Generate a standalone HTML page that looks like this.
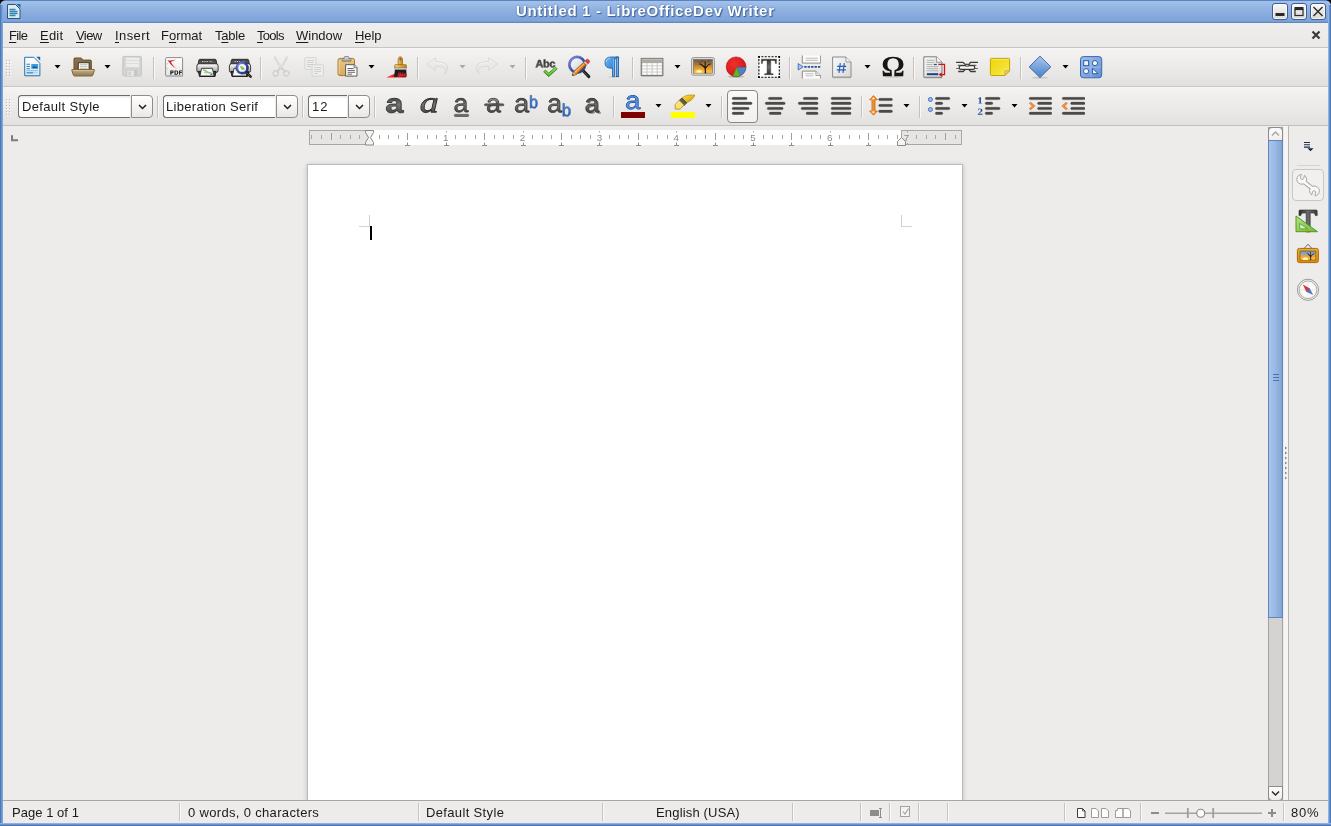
<!DOCTYPE html>
<html><head><meta charset="utf-8"><title>Untitled 1 - LibreOfficeDev Writer</title>
<style>
html,body{margin:0;padding:0}
body{width:1331px;height:826px;position:relative;overflow:hidden;background:#edeceb;font-family:"Liberation Sans", sans-serif;}
body>div,.ic{position:absolute;box-sizing:content-box}
.t{position:absolute;white-space:nowrap;line-height:20px;font-family:"Liberation Sans", sans-serif;will-change:transform}
u{text-decoration:underline;text-underline-offset:1.5px;text-decoration-thickness:1px}
</style></head>
<body>
<svg width="0" height="0" style="position:absolute"><defs><linearGradient id="gPage" x1="0" y1="0" x2="0" y2="1"><stop offset="0" stop-color="#ffffff"/><stop offset="1" stop-color="#dfe6ee"/></linearGradient><linearGradient id="gFoldB" x1="0" y1="0" x2="0" y2="1"><stop offset="0" stop-color="#8f7650"/><stop offset="1" stop-color="#74603f"/></linearGradient><linearGradient id="gFoldF" x1="0" y1="0" x2="0" y2="1"><stop offset="0" stop-color="#c4b394"/><stop offset="0.5" stop-color="#a89472"/><stop offset="1" stop-color="#8c7855"/></linearGradient><linearGradient id="gPdfPage" x1="0" y1="0" x2="0" y2="1"><stop offset="0" stop-color="#ffffff"/><stop offset="1" stop-color="#e4e4e3"/></linearGradient><linearGradient id="gPdfRed" x1="0" y1="0" x2="1" y2="1"><stop offset="0" stop-color="#e23b3b"/><stop offset="1" stop-color="#ffffff"/></linearGradient><linearGradient id="gPrBody" x1="0" y1="0" x2="0" y2="1"><stop offset="0" stop-color="#f2f2f2"/><stop offset="0.5" stop-color="#cfcfcf"/><stop offset="1" stop-color="#8e8e8e"/></linearGradient><linearGradient id="gPrTop" x1="0" y1="0" x2="0" y2="1"><stop offset="0" stop-color="#3c3c3c"/><stop offset="1" stop-color="#666666"/></linearGradient><linearGradient id="gLens" x1="0" y1="0" x2="1" y2="1"><stop offset="0" stop-color="#8a98ee"/><stop offset="0.5" stop-color="#3a4bb8"/><stop offset="1" stop-color="#1f2a7a"/></linearGradient><linearGradient id="gClipB" x1="0" y1="0" x2="0" y2="1"><stop offset="0" stop-color="#ecc587"/><stop offset="1" stop-color="#d9a95a"/></linearGradient><linearGradient id="gClipM" x1="0" y1="0" x2="0" y2="1"><stop offset="0" stop-color="#e9e9e8"/><stop offset="1" stop-color="#9c9c9a"/></linearGradient><linearGradient id="gBrH" x1="0" y1="0" x2="1" y2="0"><stop offset="0" stop-color="#f2d08a"/><stop offset="0.5" stop-color="#d9a64a"/><stop offset="1" stop-color="#b67f22"/></linearGradient><linearGradient id="gBrF" x1="0" y1="0" x2="1" y2="0"><stop offset="0" stop-color="#f5d77f"/><stop offset="0.5" stop-color="#e0ac3c"/><stop offset="1" stop-color="#b8831f"/></linearGradient><linearGradient id="gBrRed" x1="0" y1="0" x2="1" y2="0"><stop offset="0" stop-color="#ff2a2a"/><stop offset="1" stop-color="#c41616"/></linearGradient><linearGradient id="gAbc" x1="0" y1="0" x2="0" y2="1"><stop offset="0" stop-color="#1e1e1e"/><stop offset="1" stop-color="#585856"/></linearGradient><linearGradient id="gChk" x1="0" y1="0" x2="0" y2="1"><stop offset="0" stop-color="#7fe048"/><stop offset="1" stop-color="#3aa012"/></linearGradient><linearGradient id="gRing" x1="0" y1="0" x2="1" y2="1"><stop offset="0" stop-color="#8e9be6"/><stop offset="0.45" stop-color="#4455b8"/><stop offset="1" stop-color="#27348a"/></linearGradient><linearGradient id="gGlass" x1="0" y1="0" x2="1" y2="1"><stop offset="0" stop-color="#ffffff"/><stop offset="1" stop-color="#c9cbd2"/></linearGradient><linearGradient id="gPencil" x1="0" y1="0" x2="1" y2="1"><stop offset="0" stop-color="#f7b55a"/><stop offset="0.5" stop-color="#ea8c1a"/><stop offset="1" stop-color="#b8640c"/></linearGradient><linearGradient id="gPil" x1="0" y1="0" x2="1" y2="1"><stop offset="0" stop-color="#6db6f0"/><stop offset="0.5" stop-color="#3d8fd8"/><stop offset="1" stop-color="#1d66b4"/></linearGradient><linearGradient id="gSky" x1="0" y1="0" x2="0" y2="1"><stop offset="0" stop-color="#6a5a48"/><stop offset="0.35" stop-color="#a8783a"/><stop offset="0.7" stop-color="#f0a22e"/><stop offset="1" stop-color="#ffc845"/></linearGradient><radialGradient id="gSun" cx="0.5" cy="0.5" r="0.5"><stop offset="0" stop-color="#ffffff"/><stop offset="0.5" stop-color="#fff2a0"/><stop offset="1" stop-color="#ffc845"/></radialGradient><radialGradient id="gPieR" cx="0.4" cy="0.35" r="0.7"><stop offset="0" stop-color="#f03030"/><stop offset="1" stop-color="#d41212"/></radialGradient><linearGradient id="gT" x1="0" y1="0" x2="0" y2="1"><stop offset="0" stop-color="#2a2a2a"/><stop offset="0.5" stop-color="#6e6e6e"/><stop offset="1" stop-color="#2e2e2e"/></linearGradient><linearGradient id="gFld" x1="0" y1="0" x2="1" y2="1"><stop offset="0" stop-color="#f8f8f8"/><stop offset="1" stop-color="#d9d9d8"/></linearGradient><linearGradient id="gNote" x1="0" y1="0" x2="1" y2="1"><stop offset="0" stop-color="#efd60a"/><stop offset="0.6" stop-color="#f3e032"/><stop offset="1" stop-color="#f8ee80"/></linearGradient><linearGradient id="gDia" x1="0" y1="0" x2="0" y2="1"><stop offset="0" stop-color="#a9c5ec"/><stop offset="0.5" stop-color="#79a3dc"/><stop offset="1" stop-color="#4a80c8"/></linearGradient><linearGradient id="gShp" x1="0" y1="0" x2="1" y2="1"><stop offset="0" stop-color="#9ebce8"/><stop offset="0.5" stop-color="#85a9e0"/><stop offset="1" stop-color="#5f8fd2"/></linearGradient><linearGradient id="gChar" x1="0" y1="0" x2="0" y2="1"><stop offset="0" stop-color="#4c4c4a"/><stop offset="0.45" stop-color="#767674"/><stop offset="1" stop-color="#4a4a48"/></linearGradient><linearGradient id="gCharL" x1="0" y1="0" x2="0" y2="1"><stop offset="0" stop-color="#a8a8a6"/><stop offset="0.35" stop-color="#6a6a68"/><stop offset="1" stop-color="#4a4a48"/></linearGradient><linearGradient id="gBlueCh" x1="0" y1="0" x2="0" y2="1"><stop offset="0" stop-color="#6aa0e8"/><stop offset="1" stop-color="#2a62b8"/></linearGradient><linearGradient id="gMark" x1="0" y1="0" x2="1" y2="1"><stop offset="0" stop-color="#fbe25a"/><stop offset="0.5" stop-color="#e8bd1e"/><stop offset="1" stop-color="#b88a0c"/></linearGradient><linearGradient id="gLine" x1="0" y1="0" x2="0" y2="1"><stop offset="0" stop-color="#2a2a29"/><stop offset="0.6" stop-color="#4c4c4a"/><stop offset="1" stop-color="#7c7c7a"/></linearGradient><linearGradient id="gOrA" x1="0" y1="0" x2="1" y2="0"><stop offset="0" stop-color="#f6c08a"/><stop offset="0.5" stop-color="#e8923a"/><stop offset="1" stop-color="#e07a18"/></linearGradient><linearGradient id="gTs" x1="0" y1="0" x2="1" y2="0"><stop offset="0" stop-color="#2e2e2e"/><stop offset="0.5" stop-color="#6a6a6a"/><stop offset="1" stop-color="#3a3a3a"/></linearGradient><linearGradient id="gTri" x1="0" y1="0" x2="1" y2="1"><stop offset="0" stop-color="#b4e48a"/><stop offset="1" stop-color="#6cbc3a"/></linearGradient><linearGradient id="gSky2" x1="0" y1="0" x2="0" y2="1"><stop offset="0" stop-color="#5f97d4"/><stop offset="0.3" stop-color="#8aa8c4"/><stop offset="0.6" stop-color="#f0a436"/><stop offset="1" stop-color="#ffcf50"/></linearGradient><linearGradient id="gFrame" x1="0" y1="0" x2="0" y2="1"><stop offset="0" stop-color="#f0ac30"/><stop offset="1" stop-color="#d88c12"/></linearGradient><radialGradient id="gComp" cx="0.5" cy="0.5" r="0.5"><stop offset="0" stop-color="#ffffff"/><stop offset="0.8" stop-color="#fafafa"/><stop offset="1" stop-color="#e4e4e2"/></radialGradient></defs></svg>
<div style="left:0px;top:0px;width:1331px;height:23px;background:linear-gradient(#9ebde8 0px,#a3c1ea 1px,#8fb1e1 10px,#7ea3d8 21px,#6f95cd 22px);"></div>
<div style="left:0px;top:0px;width:1331px;height:1px;background:#5a82be;"></div>
<div style="left:0px;top:22px;width:1331px;height:1px;background:#5f88c5;"></div>
<svg class="ic" style="left:0;top:0" width="6" height="6" viewBox="0 0 6 6"><path d="M0 0h5C2.5 0.5 0.5 2.5 0 5z" fill="#0c0c0c"/></svg>
<svg class="ic" style="left:1325px;top:0" width="6" height="6" viewBox="0 0 6 6"><path d="M6 0h-5C3.5 0.5 5.5 2.5 6 5z" fill="#0c0c0c"/></svg>
<div class="t" id="title" style="left:515.88px;top:0.6px;font-size:15px;font-weight:bold;color:#fff;letter-spacing:0.678px;text-shadow:1px 1px 1px #3d5f94,0 0 2px #4a6ea8;">Untitled 1 - LibreOfficeDev Writer</div>
<svg class="ic" style="left:6px;top:3px" width="16" height="17" viewBox="0 0 16 17"><path d="M1.500 1.500h8l4.500 4.500v9.500h-12.500z" fill="#e4e8ee" stroke="#1f5a84" stroke-width="1"/><path d="M10.500 1h4v4z" fill="#1b6ea8"/><path d="M3.500 6.500h6M3.500 8.500h8M3.500 10.500h8M3.500 12.500h6" stroke="#2f86b4" stroke-width="1.300"/></svg>
<div style="left:1272px;top:3px;width:14px;height:15px;border:1px solid #3a5e96;border-radius:3px;background:linear-gradient(#fbfaf9,#e9e7e3 50%,#dcd9d4);box-shadow:inset 0 0 0 1px rgba(255,255,255,.7)"></div><svg class="ic" style="left:1272px;top:3px" width="16" height="17" viewBox="0 0 16 17"><rect x="3.5" y="10" width="9" height="3" fill="#2a2a2a"/></svg>
<div style="left:1291px;top:3px;width:14px;height:15px;border:1px solid #3a5e96;border-radius:3px;background:linear-gradient(#fbfaf9,#e9e7e3 50%,#dcd9d4);box-shadow:inset 0 0 0 1px rgba(255,255,255,.7)"></div><svg class="ic" style="left:1291px;top:3px" width="16" height="17" viewBox="0 0 16 17"><rect x="3.5" y="4" width="9" height="3" fill="#2a2a2a"/><rect x="4" y="6.5" width="8" height="6" fill="none" stroke="#2a2a2a" stroke-width="1.2"/></svg>
<div style="left:1310px;top:3px;width:14px;height:15px;border:1px solid #3a5e96;border-radius:3px;background:linear-gradient(#fbfaf9,#e9e7e3 50%,#dcd9d4);box-shadow:inset 0 0 0 1px rgba(255,255,255,.7)"></div><svg class="ic" style="left:1310px;top:3px" width="16" height="17" viewBox="0 0 16 17"><path d="M3.5 4l9 9M12.5 4l-9 9" stroke="#2a2a2a" stroke-width="1.4" fill="none"/></svg>
<div style="left:3px;top:23px;width:1325px;height:24px;background:linear-gradient(#efeeec,#eae9e7);"></div>
<div style="left:3px;top:47px;width:1325px;height:1px;background:#c8c6c3;"></div>
<div class="t" style="left:9.44px;top:25.50px;font-size:13px;letter-spacing:-0.654px;color:#1a1a1a;font-weight:normal;" id="m0"><u>F</u>ile</div>
<div class="t" style="left:39.98px;top:25.50px;font-size:13px;letter-spacing:0.219px;color:#1a1a1a;font-weight:normal;" id="m1"><u>E</u>dit</div>
<div class="t" style="left:76.0px;top:25.50px;font-size:13px;letter-spacing:-0.605px;color:#1a1a1a;font-weight:normal;" id="m2"><u>V</u>iew</div>
<div class="t" style="left:115.0px;top:25.50px;font-size:13px;letter-spacing:0.396px;color:#1a1a1a;font-weight:normal;" id="m3"><u>I</u>nsert</div>
<div class="t" style="left:161.26px;top:25.50px;font-size:13px;letter-spacing:-0.004px;color:#1a1a1a;font-weight:normal;" id="m4">F<u>o</u>rmat</div>
<div class="t" style="left:215.06px;top:25.50px;font-size:13px;letter-spacing:-0.2px;color:#1a1a1a;font-weight:normal;" id="m5">T<u>a</u>ble</div>
<div class="t" style="left:257.0px;top:25.50px;font-size:13px;letter-spacing:-0.7px;color:#1a1a1a;font-weight:normal;" id="m6"><u>T</u>ools</div>
<div class="t" style="left:296.0px;top:25.50px;font-size:13px;letter-spacing:-0.02px;color:#1a1a1a;font-weight:normal;" id="m7"><u>W</u>indow</div>
<div class="t" style="left:355.0px;top:25.50px;font-size:13px;letter-spacing:-0.048px;color:#1a1a1a;font-weight:normal;" id="m8"><u>H</u>elp</div>
<svg class="ic" style="left:1311px;top:30px" width="10" height="10" viewBox="0 0 10 10"><path d="M1.5 1.5l7 7M8.5 1.5l-7 7" stroke="#3a3a3a" stroke-width="2.2" fill="none"/></svg>
<div style="left:3px;top:48px;width:1325px;height:38px;background:linear-gradient(#f7f7f6 0,#f3f2f1 3px,#e9e8e6 24px,#e2e1df 38px);"></div>
<div style="left:3px;top:86px;width:1325px;height:1px;background:#c9c7c4;"></div>
<div style="left:3px;top:87px;width:1325px;height:38px;background:linear-gradient(#f7f7f6 0,#f3f2f1 3px,#e9e8e6 24px,#e2e1df 38px);"></div>
<div style="left:3px;top:125px;width:1325px;height:1px;background:#c2c0bd;"></div>
<div style="left:6px;top:60px;width:1px;height:1px;background:#b9b7b3;"></div><div style="left:7px;top:61px;width:1px;height:1px;background:#fbfbfa;"></div><div style="left:9px;top:60px;width:1px;height:1px;background:#b9b7b3;"></div><div style="left:10px;top:61px;width:1px;height:1px;background:#fbfbfa;"></div><div style="left:6px;top:63px;width:1px;height:1px;background:#b9b7b3;"></div><div style="left:7px;top:64px;width:1px;height:1px;background:#fbfbfa;"></div><div style="left:9px;top:63px;width:1px;height:1px;background:#b9b7b3;"></div><div style="left:10px;top:64px;width:1px;height:1px;background:#fbfbfa;"></div><div style="left:6px;top:66px;width:1px;height:1px;background:#b9b7b3;"></div><div style="left:7px;top:67px;width:1px;height:1px;background:#fbfbfa;"></div><div style="left:9px;top:66px;width:1px;height:1px;background:#b9b7b3;"></div><div style="left:10px;top:67px;width:1px;height:1px;background:#fbfbfa;"></div><div style="left:6px;top:69px;width:1px;height:1px;background:#b9b7b3;"></div><div style="left:7px;top:70px;width:1px;height:1px;background:#fbfbfa;"></div><div style="left:9px;top:69px;width:1px;height:1px;background:#b9b7b3;"></div><div style="left:10px;top:70px;width:1px;height:1px;background:#fbfbfa;"></div><div style="left:6px;top:72px;width:1px;height:1px;background:#b9b7b3;"></div><div style="left:7px;top:73px;width:1px;height:1px;background:#fbfbfa;"></div><div style="left:9px;top:72px;width:1px;height:1px;background:#b9b7b3;"></div><div style="left:10px;top:73px;width:1px;height:1px;background:#fbfbfa;"></div><div style="left:6px;top:75px;width:1px;height:1px;background:#b9b7b3;"></div><div style="left:7px;top:76px;width:1px;height:1px;background:#fbfbfa;"></div><div style="left:9px;top:75px;width:1px;height:1px;background:#b9b7b3;"></div><div style="left:10px;top:76px;width:1px;height:1px;background:#fbfbfa;"></div>
<div style="left:6px;top:99px;width:1px;height:1px;background:#b9b7b3;"></div><div style="left:7px;top:100px;width:1px;height:1px;background:#fbfbfa;"></div><div style="left:9px;top:99px;width:1px;height:1px;background:#b9b7b3;"></div><div style="left:10px;top:100px;width:1px;height:1px;background:#fbfbfa;"></div><div style="left:6px;top:102px;width:1px;height:1px;background:#b9b7b3;"></div><div style="left:7px;top:103px;width:1px;height:1px;background:#fbfbfa;"></div><div style="left:9px;top:102px;width:1px;height:1px;background:#b9b7b3;"></div><div style="left:10px;top:103px;width:1px;height:1px;background:#fbfbfa;"></div><div style="left:6px;top:105px;width:1px;height:1px;background:#b9b7b3;"></div><div style="left:7px;top:106px;width:1px;height:1px;background:#fbfbfa;"></div><div style="left:9px;top:105px;width:1px;height:1px;background:#b9b7b3;"></div><div style="left:10px;top:106px;width:1px;height:1px;background:#fbfbfa;"></div><div style="left:6px;top:108px;width:1px;height:1px;background:#b9b7b3;"></div><div style="left:7px;top:109px;width:1px;height:1px;background:#fbfbfa;"></div><div style="left:9px;top:108px;width:1px;height:1px;background:#b9b7b3;"></div><div style="left:10px;top:109px;width:1px;height:1px;background:#fbfbfa;"></div><div style="left:6px;top:111px;width:1px;height:1px;background:#b9b7b3;"></div><div style="left:7px;top:112px;width:1px;height:1px;background:#fbfbfa;"></div><div style="left:9px;top:111px;width:1px;height:1px;background:#b9b7b3;"></div><div style="left:10px;top:112px;width:1px;height:1px;background:#fbfbfa;"></div><div style="left:6px;top:114px;width:1px;height:1px;background:#b9b7b3;"></div><div style="left:7px;top:115px;width:1px;height:1px;background:#fbfbfa;"></div><div style="left:9px;top:114px;width:1px;height:1px;background:#b9b7b3;"></div><div style="left:10px;top:115px;width:1px;height:1px;background:#fbfbfa;"></div>
<svg class="ic" style="left:20.0px;top:55.0px" width="24" height="24" viewBox="0 0 24 24"><path d="M4.7 2.3h9.2l6 6v12.4h-15.2z" fill="url(#gPage)" stroke="#2675a8" stroke-width="1"/><path d="M16.3 1.8h3.9v3.9z" fill="#1a6aa5"/><path d="M6.5 9.2h3.4M6.500 11.500h3.400M6.500 13.800h3.400" stroke="#2b84c4" stroke-width="1.1"/><rect x="11.3" y="9" width="6.8" height="4.900" fill="#35a0e6"/><path d="M12.300 12.800l1.600-2 1.300 1.200 1-1 1.200 1.800z" fill="#234a6a"/><path d="M6.500 15.700h11.600" stroke="#7fc0ea" stroke-width="1.100"/><path d="M6.500 17.800h6.500" stroke="#3a8dc8" stroke-width="1.300"/><path d="M13 17.800h5" stroke="#a5d2ee" stroke-width="1.100"/><path d="M5.500 21.200h14" stroke="#8fa8bd" stroke-width=".8" opacity=".6"/></svg>
<svg class="ic" style="left:54.0px;top:65px" width="7" height="4" viewBox="0 0 7 4"><path d="M0.5 0h6L3.5 3.5z" fill="#000"/></svg>
<svg class="ic" style="left:70.5px;top:55.0px" width="24" height="24" viewBox="0 0 24 24"><path d="M3 15.500v-11.600q0-.9.900-.9h6q.800 0 1.100.900l.400 1.200h8q.900 0 .900.900v9.500z" fill="url(#gFoldB)" stroke="#6a4d1c" stroke-width="1"/><rect x="7.300" y="7.700" width="10.800" height="8.500" fill="#fbfbfa" stroke="#3b3a37" stroke-width="1"/><path d="M9 9.800h7.500M9 11.800h7.500M9 13.700h7.500" stroke="#b9b9b3" stroke-width="1.100"/><path d="M1.300 14.500h21.600q.700 0 .500.800l-1.600 4.900q-.3.800-1.100.8h-17.200q-.8 0-1.100-.8l-1.600-4.900q-.2-.8.500-.8z" fill="url(#gFoldF)" stroke="#8a6622" stroke-width="1"/><path d="M2.300 15.500h19.600" stroke="#d9ccb2" stroke-width=".8" opacity=".8"/></svg>
<svg class="ic" style="left:104.0px;top:65px" width="7" height="4" viewBox="0 0 7 4"><path d="M0.5 0h6L3.5 3.5z" fill="#000"/></svg>
<svg class="ic" style="left:120.0px;top:55.0px" width="24" height="24" viewBox="0 0 24 24"><path d="M2.800 2.400q0-1 1-1h16.500q1 0 1 1v17.600q0 1-1 1h-16q-.5 0-.9-.4l-.3-.3q-.3-.3-.3-.8z" fill="#d4d4d3" stroke="#c4c4c3" stroke-width="1"/><rect x="5.300" y="2.200" width="14.500" height="10.300" fill="#ececeb" stroke="#cfcfce" stroke-width=".6"/><path d="M6 5.500h13M6 8.500h13" stroke="#d9d9d8" stroke-width=".8"/><rect x="6" y="14.800" width="11.500" height="6.400" fill="#c7c7c6"/><rect x="7.200" y="15.500" width="6.800" height="5.400" fill="#e6e6e5"/><rect x="8.600" y="16.500" width="2.200" height="3.600" fill="#cfcfce"/></svg>
<div style="left:152.5px;top:57px;width:1px;height:22px;background:#c4c2be;"></div><div style="left:153.5px;top:57px;width:1px;height:22px;background:#f8f8f7;"></div>
<svg class="ic" style="left:162.0px;top:55.0px" width="24" height="24" viewBox="0 0 24 24"><rect x="3.600" y="2.600" width="17" height="18.400" rx="1" fill="url(#gPdfPage)" stroke="#8c8c8b" stroke-width="1"/><path d="M21 21.500h-17" stroke="#b0b0af" stroke-width=".8"/><path d="M5.800 5.600l8 -.9 -5.500 2.300 8.700 8.200q-5 -2 -8.600 -6.200z" fill="url(#gPdfRed)" opacity=".85"/><path d="M5.300 4.800q1.500 1.400 3 1.300l5.800-1.500-5.300 2.500q1.500 3.500 4 6-4.500-3.500-5.500-6.300-1.200-.6-2-2z" fill="#d21f1f"/><circle cx="5.300" cy="8.700" r=".5" fill="#aaa"/><circle cx="5.300" cy="13.700" r=".5" fill="#aaa"/><path d="M8.300 15.400h2.100q1.300 0 1.300 1.400t-1.300 1.400h-1v1.600h-1.100zM9.400 16.300v1h.8q.4 0 .4-.5t-.4-.5z" fill="#161616"/><path d="M12.500 15.400h1.900q1.900 0 1.900 2.200t-1.900 2.200h-1.900zM13.600 16.300v2.600h.7q.9 0 .9-1.300t-.9-1.300z" fill="#161616"/><path d="M17.100 15.400h3.100v.95h-2v.85h1.800v.9h-1.800v1.700h-1.100z" fill="#161616"/></svg>
<svg class="ic" style="left:194.5px;top:55.0px" width="24" height="24" viewBox="0 0 24 24"><path d="M4.900 4.300h15.200q.800 0 1 .800l.9 4.900h-19l.9-4.900q.2-.8 1-.8z" fill="url(#gPrTop)" stroke="#2a2a2a" stroke-width=".9"/><path d="M7 6.500h1.300M9.300 6.500h1.300M11.600 6.500h1.300" stroke="#c9c9c9" stroke-width="1.200"/><path d="M14 6.500h3.500" stroke="#8d8d8d" stroke-width="1.200"/><rect x="1.900" y="8.900" width="21.200" height="8.600" rx="2" fill="url(#gPrBody)" stroke="#2a2a2a" stroke-width=".9"/><path d="M3.300 10.100h18.500" stroke="#fff" stroke-width=".9" opacity=".9"/><path d="M3.500 16.500h17.500l-1 5h-15.500z" fill="#3a3a3a" stroke="#1c1c1c" stroke-width="1"/><path d="M6.600 13.300h10.800l1.700 7.700h-14.200z" fill="#fafafa" stroke="#2a2a2a" stroke-width=".9"/><path d="M8 14.800q2 .2 3 1.500t3.500 1.500 2.500 1.700" stroke="#6fb04a" stroke-width="1.600" fill="none" opacity=".75"/><path d="M9 17.500q1.500-.2 2.500 1" stroke="#8cc96a" stroke-width="1.200" fill="none" opacity=".7"/><rect x="15.300" y="18.800" width="2" height="1.200" fill="#3a8ee6"/></svg>
<svg class="ic" style="left:228.0px;top:55.0px" width="24" height="24" viewBox="0 0 24 24"><g transform="translate(-0.5 0)"><path d="M4.900 4.300h15.200q.800 0 1 .800l.9 4.900h-19l.9-4.900q.2-.8 1-.8z" fill="url(#gPrTop)" stroke="#2a2a2a" stroke-width=".9"/><path d="M7 6.500h1.300M9.300 6.500h1.300M11.600 6.500h1.300" stroke="#c9c9c9" stroke-width="1.200"/><path d="M14 6.500h3.500" stroke="#8d8d8d" stroke-width="1.200"/><rect x="1.900" y="8.900" width="21.200" height="8.600" rx="2" fill="url(#gPrBody)" stroke="#2a2a2a" stroke-width=".9"/><path d="M3.300 10.100h18.500" stroke="#fff" stroke-width=".9" opacity=".9"/><path d="M3.500 16.500h17.500l-1 5h-15.500z" fill="#3a3a3a" stroke="#1c1c1c" stroke-width="1"/><path d="M6.600 13.300h10.800l1.700 7.700h-14.200z" fill="#fafafa" stroke="#2a2a2a" stroke-width=".9"/><path d="M8 14.800q2 .2 3 1.500t3.500 1.500 2.500 1.700" stroke="#6fb04a" stroke-width="1.600" fill="none" opacity=".75"/><path d="M9 17.500q1.500-.2 2.500 1" stroke="#8cc96a" stroke-width="1.200" fill="none" opacity=".7"/></g><path d="M18.300 17.300l4.300 4.300" stroke="#1a1a1a" stroke-width="2.600" stroke-linecap="round"/><path d="M18.300 17.300l4 4" stroke="#6b5a3a" stroke-width="1" stroke-linecap="round"/><circle cx="14.200" cy="12.900" r="5.100" fill="#f4f8f4" stroke="url(#gLens)" stroke-width="2.300"/><path d="M11.800 11.500q2-.8 3.500.5t1.500 2.500q-2 1-3.500-.3z" fill="#6fb04a" opacity=".8"/><circle cx="14.200" cy="12.900" r="6.200" fill="none" stroke="#1d2670" stroke-width=".6"/></svg>
<div style="left:259.5px;top:57px;width:1px;height:22px;background:#c4c2be;"></div><div style="left:260.5px;top:57px;width:1px;height:22px;background:#f8f8f7;"></div>
<svg class="ic" style="left:269.0px;top:55.0px" width="24" height="24" viewBox="0 0 24 24"><path d="M6 1.600q-.5 1 .2 2.600l5.500 10 1-1.400z" fill="#f1f1f0" stroke="#c8c8c7" stroke-width=".7"/><path d="M18 1.600q.5 1-.2 2.600l-5.500 10-1-1.400z" fill="#f1f1f0" stroke="#c8c8c7" stroke-width=".7"/><circle cx="6.700" cy="18.400" r="2.600" fill="none" stroke="#cbcbca" stroke-width="1.700" stroke-dasharray="1.500 .5"/><circle cx="17.300" cy="18.400" r="2.600" fill="none" stroke="#cbcbca" stroke-width="1.700" stroke-dasharray="1.500 .5"/><path d="M8.300 16.200l3-3.200M15.700 16.200l-3-3.200" stroke="#cbcbca" stroke-width="1.600"/></svg>
<svg class="ic" style="left:302.0px;top:55.0px" width="24" height="24" viewBox="0 0 24 24"><rect x="2.900" y="2.700" width="11.200" height="11.600" rx=".8" fill="#efefee" stroke="#d3d3d2" stroke-width="1"/><path d="M5 5.500h7M5 7.500h7M5 9.500h7M5 11.500h4" stroke="#d0d0cf" stroke-width="1"/><rect x="10.100" y="9.700" width="11.300" height="11.400" rx=".8" fill="#efefee" stroke="#d3d3d2" stroke-width="1"/><path d="M12.200 12.500h7M12.200 14.500h7M12.200 16.500h7M12.200 18.500h4" stroke="#d0d0cf" stroke-width="1"/></svg>
<svg class="ic" style="left:334.5px;top:55.0px" width="24" height="24" viewBox="0 0 24 24"><rect x="3" y="3.400" width="16.500" height="17.200" rx="2" fill="url(#gClipB)" stroke="#a87a2c" stroke-width="1"/><path d="M4.200 5.500v13.500" stroke="#f6dcae" stroke-width=".9" opacity=".8"/><path d="M7.200 6.200v-2q0-.6.600-.6h1.400v-1.200q0-.8.800-.8h3q.8 0 .8.800v1.200h1.400q.6 0 .6.600v2z" fill="url(#gClipM)" stroke="#7d7d7b" stroke-width=".9"/><path d="M10.600 9.700h8.600l2.800 2.800v8.600h-11.400z" fill="#fcfcfc" stroke="#5c5c5a" stroke-width="1"/><path d="M19 9.900v2.800h2.800" fill="#dadad8" stroke="#5c5c5a" stroke-width=".7"/><path d="M12.500 13.500h6M12.500 15.400h7.500M12.500 17.300h7.500M12.500 19.200h4.500" stroke="#6a6a68" stroke-width="1"/></svg>
<svg class="ic" style="left:368.0px;top:65px" width="7" height="4" viewBox="0 0 7 4"><path d="M0.5 0h6L3.5 3.5z" fill="#000"/></svg>
<svg class="ic" style="left:385.0px;top:55.0px" width="24" height="24" viewBox="0 0 24 24"><path d="M1.300 22.600l10-4.700 10.200 2.900q.5 1.500-1 1.800z" fill="url(#gBrRed)"/><path d="M13.300 9.800q-.5-3.500 0-6 .3-2 2-2t2 2q.5 2.500 0 6z" fill="url(#gBrH)" stroke="#9a6a18" stroke-width=".8"/><ellipse cx="15.300" cy="4.300" rx=".8" ry="1.200" fill="#8a5d14"/><path d="M10.300 9.700h10.500q.5 0 .5.500v2.900h-11.500v-2.900q0-.5.500-.5z" fill="url(#gBrF)" stroke="#9a6a18" stroke-width=".8"/><rect x="9.900" y="13" width="11.300" height="1.700" fill="#d8d8d8" stroke="#8c8c8c" stroke-width=".5"/><path d="M9.900 14.700h11.300l.5 6.300q-3 1-5.500 .3t-4.500.5l-2.600 .4z" fill="#1c1c1c"/><path d="M12.500 20.500q1-3.500 2-3.800l-.2 3.300 1.800-3.600.3 3.500 1.700-3.200.5 3.500 1.500-2.800.8 3.300q-4 .8-8.400-.2z" fill="#e02020"/></svg>
<div style="left:417.0px;top:57px;width:1px;height:22px;background:#c4c2be;"></div><div style="left:418.0px;top:57px;width:1px;height:22px;background:#f8f8f7;"></div>
<svg class="ic" style="left:425.0px;top:55.0px" width="24" height="24" viewBox="0 0 24 24"><path d="M1.700 9.200l8.600-6.300v3.800q8.500-.3 11.600 3.600 2.200 3.800-2.200 8.600 2-4.500-.5-6.300-3-1.500-8.900-1.300v4z" fill="#e9e9e8" stroke="#d6d6d5" stroke-width=".9" stroke-linejoin="round"/><path d="M3.500 9.200l5.800-4.200v2.700q8-.3 11 2.500" fill="none" stroke="#f6f6f5" stroke-width=".8"/></svg>
<svg class="ic" style="left:459.0px;top:65px" width="7" height="4" viewBox="0 0 7 4"><path d="M0.5 0h6L3.5 3.5z" fill="#a9a8a5"/></svg>
<svg class="ic" style="left:474.0px;top:55.0px" width="24" height="24" viewBox="0 0 24 24"><g transform="translate(25 0) scale(-1 1)"><path d="M1.700 9.200l8.600-6.300v3.800q8.500-.3 11.600 3.600 2.200 3.800-2.200 8.600 2-4.500-.5-6.300-3-1.500-8.900-1.300v4z" fill="#e9e9e8" stroke="#d6d6d5" stroke-width=".9" stroke-linejoin="round"/><path d="M3.500 9.200l5.800-4.200v2.700q8-.3 11 2.500" fill="none" stroke="#f6f6f5" stroke-width=".8"/></g></svg>
<svg class="ic" style="left:509.0px;top:65px" width="7" height="4" viewBox="0 0 7 4"><path d="M0.5 0h6L3.5 3.5z" fill="#a9a8a5"/></svg>
<div style="left:524.5px;top:57px;width:1px;height:22px;background:#c4c2be;"></div><div style="left:525.5px;top:57px;width:1px;height:22px;background:#f8f8f7;"></div>
<svg class="ic" style="left:534.0px;top:55.0px" width="24" height="24" viewBox="0 0 24 24"><path d="M7.48 12.3 6.82 10.44H3.99L3.33 12.3H1.77L4.48 5.01H6.32L9.02 12.3ZM5.4 6.13 5.37 6.24Q5.32 6.43 5.24 6.67Q5.17 6.91 4.33 9.29H6.47L5.74 7.19L5.51 6.49ZM15.22 9.48Q15.22 10.87 14.65 11.63Q14.08 12.4 13.03 12.4Q12.42 12.4 11.98 12.14Q11.53 11.89 11.3 11.4H11.29Q11.29 11.58 11.26 11.9Q11.24 12.21 11.21 12.3H9.77Q9.81 11.82 9.81 11.02V4.62H11.3V6.76L11.28 7.67H11.3Q11.8 6.6 13.12 6.6Q14.14 6.6 14.68 7.35Q15.22 8.1 15.22 9.48ZM13.67 9.48Q13.67 8.53 13.39 8.07Q13.1 7.61 12.51 7.61Q11.9 7.61 11.59 8.1Q11.28 8.59 11.28 9.53Q11.28 10.42 11.58 10.91Q11.89 11.41 12.49 11.41Q13.67 11.41 13.67 9.48ZM18.55 12.4Q17.25 12.4 16.54 11.65Q15.83 10.89 15.83 9.53Q15.83 8.14 16.55 7.37Q17.26 6.6 18.57 6.6Q19.58 6.6 20.24 7.09Q20.9 7.59 21.07 8.46L19.57 8.54Q19.51 8.11 19.26 7.85Q19 7.6 18.54 7.6Q17.39 7.6 17.39 9.47Q17.39 11.41 18.56 11.41Q18.98 11.41 19.27 11.15Q19.55 10.89 19.62 10.37L21.11 10.44Q21.03 11.01 20.69 11.46Q20.35 11.91 19.79 12.16Q19.24 12.4 18.55 12.4Z" fill="url(#gAbc)" stroke="#2e2e2e" stroke-width=".55" stroke-linejoin="round"/><path d="M7.48 12.3 6.82 10.44H3.99L3.33 12.3H1.77L4.48 5.01H6.32L9.02 12.3ZM5.4 6.13 5.37 6.24Q5.32 6.43 5.24 6.67Q5.17 6.91 4.33 9.29H6.47L5.74 7.19L5.51 6.49ZM15.22 9.48Q15.22 10.87 14.65 11.63Q14.08 12.4 13.03 12.4Q12.42 12.4 11.98 12.14Q11.53 11.89 11.3 11.4H11.29Q11.29 11.58 11.26 11.9Q11.24 12.21 11.21 12.3H9.77Q9.81 11.82 9.81 11.02V4.62H11.3V6.76L11.28 7.67H11.3Q11.8 6.6 13.12 6.6Q14.14 6.6 14.68 7.35Q15.22 8.1 15.22 9.48ZM13.67 9.48Q13.67 8.53 13.39 8.07Q13.1 7.61 12.51 7.61Q11.9 7.61 11.59 8.1Q11.28 8.59 11.28 9.53Q11.28 10.42 11.58 10.91Q11.89 11.41 12.49 11.41Q13.67 11.41 13.67 9.48ZM18.55 12.4Q17.25 12.4 16.54 11.65Q15.83 10.89 15.83 9.53Q15.83 8.14 16.55 7.37Q17.26 6.6 18.57 6.6Q19.58 6.6 20.24 7.09Q20.9 7.59 21.07 8.46L19.57 8.54Q19.51 8.11 19.26 7.85Q19 7.6 18.54 7.6Q17.39 7.6 17.39 9.47Q17.39 11.41 18.56 11.41Q18.98 11.41 19.27 11.15Q19.55 10.89 19.62 10.37L21.11 10.44Q21.03 11.01 20.69 11.46Q20.35 11.91 19.79 12.16Q19.24 12.4 18.55 12.4Z" fill="none" stroke="#b5b5b3" stroke-width=".35" opacity=".55" transform="translate(0 .15)"/><path d="M9.600 16.800l1.800-1.700 3.300 3 6.800-6 1.700 1.800-8.500 7.700z" fill="url(#gChk)" stroke="#2f8410" stroke-width=".8" stroke-linejoin="round"/><path d="M11.400 16.400l3.300 3 7-6.200" fill="none" stroke="#b9f090" stroke-width=".7" opacity=".8"/></svg>
<svg class="ic" style="left:567.0px;top:55.0px" width="24" height="24" viewBox="0 0 24 24"><path d="M15.500 15l6.300 6.600" stroke="#1b1b1b" stroke-width="3" stroke-linecap="round"/><path d="M16.500 16.500l4.500 4.700" stroke="#5a5a5a" stroke-width=".9" stroke-linecap="round"/><circle cx="10.200" cy="9.700" r="7.600" fill="url(#gGlass)" stroke="url(#gRing)" stroke-width="2.300"/><circle cx="10.200" cy="9.700" r="8.800" fill="none" stroke="#232e80" stroke-width=".5"/><g transform="rotate(-43 13.700 12.700)"><path d="M2.300 12.700l3.400-1.900h14v3.800h-14z" fill="url(#gPencil)" stroke="#7a420a" stroke-width=".7" stroke-linejoin="round"/><path d="M2.300 12.700l3.400-1.900v3.800z" fill="#f0d9b0" stroke="#7a420a" stroke-width=".5"/><path d="M2.300 12.700l1.300-.7v1.400z" fill="#222"/><path d="M6 12.100h13.500" stroke="#fbd08a" stroke-width=".8"/><rect x="19.500" y="10.700" width="2.300" height="4" fill="#c9c9c9" stroke="#6f6f6f" stroke-width=".5"/><path d="M21.800 10.700h1.800q1.300 0 1.300 2t-1.300 2h-1.800z" fill="#ee3a3a" stroke="#b01c1c" stroke-width=".5"/></g></svg>
<svg class="ic" style="left:600.0px;top:55.0px" width="24" height="24" viewBox="0 0 24 24"><path d="M10.500 2h8.100v1.800h-4v17.800h-2.100v-8.400h-2q-5.500-.2-5.500-5.600t5.500-5.600z" fill="url(#gPil)" stroke="#1b5fa8" stroke-width=".8" stroke-linejoin="round"/><rect x="16.300" y="2" width="2.200" height="19.600" fill="url(#gPil)" stroke="#1b5fa8" stroke-width=".8"/><path d="M13.550 4v17M17.400 3v18" stroke="#8cc4f2" stroke-width=".7"/><path d="M10 3.100q-4 .3-4 4.300" stroke="#a8d4f6" stroke-width=".9" fill="none"/><ellipse cx="14" cy="22.100" rx="6" ry=".7" fill="#000" opacity=".13"/></svg>
<div style="left:632.0px;top:57px;width:1px;height:22px;background:#c4c2be;"></div><div style="left:633.0px;top:57px;width:1px;height:22px;background:#f8f8f7;"></div>
<svg class="ic" style="left:640.0px;top:55.0px" width="24" height="24" viewBox="0 0 24 24"><rect x="1.200" y="3.400" width="21.700" height="17" fill="#c6c6c0" stroke="#6e6e6a" stroke-width="1"/><rect x="1.700" y="3.900" width="20.700" height="2.800" fill="#a9a9a3"/><path d="M1.700 4.300h20.700" stroke="#d2d2cc" stroke-width=".7"/><path d="M1.700 7.300h20.700" stroke="#8f8f8a" stroke-width=".6"/><rect x="2.4" y="8.2" width="4.100" height="2.200" fill="#fdfdfd"/><rect x="2.4" y="11.3" width="4.100" height="2.200" fill="#fdfdfd"/><rect x="2.4" y="14.4" width="4.100" height="2.200" fill="#fdfdfd"/><rect x="2.4" y="17.5" width="4.100" height="2.200" fill="#fdfdfd"/><rect x="7.5" y="8.2" width="4.100" height="2.200" fill="#fdfdfd"/><rect x="7.5" y="11.3" width="4.100" height="2.200" fill="#fdfdfd"/><rect x="7.5" y="14.4" width="4.100" height="2.200" fill="#fdfdfd"/><rect x="7.5" y="17.5" width="4.100" height="2.200" fill="#fdfdfd"/><rect x="12.6" y="8.2" width="4.100" height="2.200" fill="#fdfdfd"/><rect x="12.6" y="11.3" width="4.100" height="2.200" fill="#fdfdfd"/><rect x="12.6" y="14.4" width="4.100" height="2.200" fill="#fdfdfd"/><rect x="12.6" y="17.5" width="4.100" height="2.200" fill="#fdfdfd"/><rect x="17.7" y="8.2" width="4.100" height="2.200" fill="#fdfdfd"/><rect x="17.7" y="11.3" width="4.100" height="2.200" fill="#fdfdfd"/><rect x="17.7" y="14.4" width="4.100" height="2.200" fill="#fdfdfd"/><rect x="17.7" y="17.5" width="4.100" height="2.200" fill="#fdfdfd"/><path d="M1.500 21.400h21.200" stroke="#55554f" stroke-width=".6" opacity=".5"/></svg>
<svg class="ic" style="left:673.5px;top:65px" width="7" height="4" viewBox="0 0 7 4"><path d="M0.5 0h6L3.5 3.5z" fill="#000"/></svg>
<svg class="ic" style="left:691.0px;top:55.0px" width="24" height="24" viewBox="0 0 24 24"><rect x="0.700" y="2.700" width="22.600" height="17.400" rx="1.600" fill="#ececea" stroke="#8a8a88" stroke-width="1"/><rect x="2.600" y="4.600" width="18.800" height="13.600" fill="url(#gSky)" stroke="#5a5a56" stroke-width=".6"/><path d="M4.300 18.200a3.800 3.800 0 0 1 7.600 0z" fill="url(#gSun)"/><path d="M13.600 18.200q.4-3-.1-5l-3.600-3.400-3-.8 3.200.1-1.600-2.100 2.200 2 2.800 2.300.2-3.200-1.600-2.300 2 1.800.5-2.300.2 3.800-.1 3 2.800-3.200 3.200-.9-2.600 1.500 2.200-.1-2.900.9-2.400 3.100q-.3 2.600.3 4.800z" fill="#20170f"/><path d="M7.500 7.200l2.200 1.400M16.800 6.800l1.600-1.300M10.500 5.800l.8 1.300" stroke="#20170f" stroke-width=".6"/></svg>
<svg class="ic" style="left:724.0px;top:55.0px" width="24" height="24" viewBox="0 0 24 24"><ellipse cx="12.200" cy="21.600" rx="8.500" ry="1.300" fill="#000" opacity=".18"/><circle cx="12.100" cy="11.800" r="9.900" fill="url(#gPieR)" stroke="#b51010" stroke-width=".6"/><path d="M12.700 12.300h9.300q-.3 5.500-5.800 8.300z" fill="#4a86c6" stroke="#35689e" stroke-width=".4"/><path d="M12.700 12.300l3.500 8.300q-3.500 1.700-7.300.5z" fill="#5cb82c" stroke="#3f8a18" stroke-width=".4"/></svg>
<svg class="ic" style="left:757.0px;top:55.0px" width="24" height="24" viewBox="0 0 24 24"><rect x="1.900" y="1.800" width="20.400" height="20.400" fill="#fff"/><rect x="1.900" y="1.800" width="20.400" height="20.400" fill="none" stroke="#0a0a0a" stroke-width="1.100" stroke-dasharray="2.100 1.300" stroke-dashoffset="1"/><path d="M1.100 1h1.800v1.800h-1.800zM21.300 1h1.800v1.800h-1.800zM1.100 21.200h1.800v1.800h-1.800zM21.300 21.200h1.800v1.800h-1.800z" fill="#0a0a0a"/><path d="M7.59 19.7V18.86L10.05 18.54V5.41H9.46Q6.81 5.41 5.74 5.64L5.42 8.52H4.37V4.18H19.45V8.52H18.38L18.07 5.64Q17.11 5.43 14.28 5.43H13.71V18.54L16.17 18.86V19.7Z" fill="url(#gT)" stroke="#2a2a2a" stroke-width=".4"/></svg>
<div style="left:789.0px;top:57px;width:1px;height:22px;background:#c4c2be;"></div><div style="left:790.0px;top:57px;width:1px;height:22px;background:#f8f8f7;"></div>
<svg class="ic" style="left:797.0px;top:55.0px" width="24" height="24" viewBox="0 0 24 24"><path d="M5.300 0.500v7.600h18.400v-7.600" fill="#fbfbfb" stroke="#8a8a88" stroke-width="1"/><path d="M8.500 3.200h12.300M8.500 5.300h12.300" stroke="#bdbdbb" stroke-width="1"/><path d="M5.300 23.500v-7.400h13.600l4.800 4.400v3" fill="#fbfbfb" stroke="#8a8a88" stroke-width="1"/><path d="M18.900 16.100v4.400h4.800" fill="#e9e9e8" stroke="#8a8a88" stroke-width=".8"/><path d="M8.500 18.700h8M8.500 20.800h8" stroke="#bdbdbb" stroke-width="1"/><path d="M1.200 8.600l5 3.200-5 3.200z" fill="#a9c8f0" stroke="#3a6cb8" stroke-width=".9" stroke-linejoin="round"/><path d="M7.300 11.900h16.500" stroke="#2855a0" stroke-width="1.900" stroke-dasharray="2.400 1"/></svg>
<svg class="ic" style="left:830.0px;top:55.0px" width="24" height="24" viewBox="0 0 24 24"><path d="M2.600 2h13.400l5 5v15.100h-18.400z" fill="url(#gFld)" stroke="#8a8a88" stroke-width="1" stroke-linejoin="round"/><path d="M16 2v5h5" fill="#f4f4f4" stroke="#8a8a88" stroke-width=".8" stroke-linejoin="round"/><path d="M3 22.800h18" stroke="#777" stroke-width=".7" opacity=".5"/><path d="M10.300 8.200l-1.300 9.600M14.300 8.200l-1.300 9.600M7.200 11.300h9M6.800 14.800h9" stroke="#2a5cb0" stroke-width="1.150" fill="none"/></svg>
<svg class="ic" style="left:864.0px;top:65px" width="7" height="4" viewBox="0 0 7 4"><path d="M0.5 0h6L3.5 3.5z" fill="#000"/></svg>
<svg class="ic" style="left:881.0px;top:55.0px" width="24" height="24" viewBox="0 0 24 24"><path d="M12.07 3.25Q9.33 3.25 7.86 4.81Q6.39 6.36 6.39 9.26Q6.39 11.81 7.46 13.29Q8.54 14.77 10.58 15.09L10.92 21.3H1.93L1.6 15.78H2.83L3.71 17.62Q4.86 17.85 7.42 17.85H8.99L8.92 16.34Q5.47 15.85 3.54 14.01Q1.61 12.17 1.61 9.26Q1.61 5.7 4.33 3.75Q7.05 1.8 12.07 1.8Q17.07 1.8 19.8 3.74Q22.52 5.68 22.52 9.26Q22.52 12.17 20.59 14.01Q18.67 15.85 15.22 16.34L15.14 17.85H16.71Q19.27 17.85 20.42 17.62L21.3 15.78H22.53L22.2 21.3H13.22L13.55 15.09Q15.6 14.77 16.67 13.28Q17.75 11.79 17.75 9.26Q17.75 6.37 16.28 4.81Q14.81 3.25 12.07 3.25Z" fill="#161616"/><ellipse cx="12" cy="22" rx="9" ry=".7" fill="#000" opacity=".12"/></svg>
<div style="left:912.5px;top:57px;width:1px;height:22px;background:#c4c2be;"></div><div style="left:913.5px;top:57px;width:1px;height:22px;background:#f8f8f7;"></div>
<svg class="ic" style="left:922.0px;top:55.0px" width="24" height="24" viewBox="0 0 24 24"><path d="M1.800 1.800h12.600l5.600 5.400v15h-18.200z" fill="url(#gFld)" stroke="#7e7e7c" stroke-width="1" stroke-linejoin="round"/><path d="M14.400 1.800v5.400h5.600" fill="#f6f6f6" stroke="#7e7e7c" stroke-width=".8" stroke-linejoin="round"/><path d="M2.500 22.900h17.500" stroke="#555" stroke-width=".7" opacity=".5"/><path d="M4.500 5.300h8M4.500 7.400h8M4.500 9.500h6M4.500 11.600h11.500M4.500 13.700h11.500M4.500 15.800h11.500" stroke="#b4b4b2" stroke-width="1"/><path d="M11.800 9.500h3" stroke="#2a4f98" stroke-width="1.200"/><path d="M4.800 19.200h11.400" stroke="#1e3f8c" stroke-width="2"/><path d="M16.300 9.300h6.200v10.300h-3.600" fill="none" stroke="#d01414" stroke-width="1.300"/><path d="M19.800 17.400v4.400l-3.300-2.200z" fill="#d01414"/></svg>
<svg class="ic" style="left:955.0px;top:55.0px" width="24" height="24" viewBox="0 0 24 24"><path d="M1.100 7.300h6.800l2.200 2.100h4.100l1.200-2.100h7.600" fill="none" stroke="#3a3a38" stroke-width="1.250" stroke-linejoin="round"/><path d="M2.800 10.300h6.500M14.800 10.300h6.500" stroke="#4a4a48" stroke-width="1"/><path d="M1.100 13.500h3M19.800 13.500h3.200" stroke="#5a5a58" stroke-width=".9"/><rect x="4.300" y="10.600" width="15.400" height="3.800" rx="1.700" fill="#fafafa" stroke="#3a3a38" stroke-width="1.250"/><path d="M10.500 9.600h3.300v1.500h-3.300z" fill="#f4f4f3" stroke="#3a3a38" stroke-width=".8"/><path d="M3.200 16.500h5l2.200-2.100M20.800 16.500h-5l-2.200-2.100" fill="none" stroke="#3a3a38" stroke-width="1.300" stroke-linejoin="round"/></svg>
<svg class="ic" style="left:988.0px;top:55.0px" width="24" height="24" viewBox="0 0 24 24"><path d="M3.300 3.400h17.400q.9 0 .9.900v11.500l-4.700 4.700h-13.600q-.9 0-.9-.9v-15.300q0-.9.900-.9z" fill="url(#gNote)" stroke="#c4a400" stroke-width="1" stroke-linejoin="round"/><path d="M21.500 15.800h-3.800q-.8 0-.8.800v3.800z" fill="#e8d49a" stroke="#c4a400" stroke-width=".8" stroke-linejoin="round"/><path d="M3.400 4.600h17.200" stroke="#fbf3a0" stroke-width=".8" opacity=".8"/></svg>
<div style="left:1020.0px;top:57px;width:1px;height:22px;background:#c4c2be;"></div><div style="left:1021.0px;top:57px;width:1px;height:22px;background:#f8f8f7;"></div>
<svg class="ic" style="left:1028.0px;top:55.0px" width="24" height="24" viewBox="0 0 24 24"><ellipse cx="12" cy="22.800" rx="8" ry="1" fill="#000" opacity=".12"/><path d="M12 1.200l10.800 10.700-10.800 10.700-10.800-10.700z" fill="url(#gDia)" stroke="#3a68b0" stroke-width="1" stroke-linejoin="round"/><path d="M12 2.700l9.300 9.200" stroke="#c4d8f4" stroke-width=".7" fill="none" opacity=".7"/></svg>
<svg class="ic" style="left:1061.5px;top:65px" width="7" height="4" viewBox="0 0 7 4"><path d="M0.5 0h6L3.5 3.5z" fill="#000"/></svg>
<svg class="ic" style="left:1079.0px;top:55.0px" width="24" height="24" viewBox="0 0 24 24"><rect x="1.500" y="1.600" width="21.200" height="21.200" rx="2.800" fill="url(#gShp)" stroke="#3a68b0" stroke-width="1"/><path d="M12 2.500v19.500M2.500 12.200h19.500" stroke="#b8cff0" stroke-width=".6" opacity=".7"/><rect x="4.700" y="5.700" width="4.900" height="4.900" fill="#f2f6fc" stroke="#2f5ea8" stroke-width="1"/><circle cx="16" cy="8.100" r="2.600" fill="#f2f6fc" stroke="#2f5ea8" stroke-width="1"/><circle cx="7.100" cy="16.200" r="2.600" fill="#f2f6fc" stroke="#2f5ea8" stroke-width="1"/><path d="M13.500 13.200v5.500h5.500z" fill="#f2f6fc" stroke="#2f5ea8" stroke-width="1" stroke-linejoin="round"/></svg>
<div style="left:18px;top:95px;width:111px;height:21px;border:1px solid #6f6b67;border-right:none;border-radius:3.5px 0 0 3.5px;background:linear-gradient(#e4e3e1 0,#fbfbfb 2px,#fff 4px);"></div><div style="left:131px;top:95px;width:20px;height:21px;border:1px solid #908c88;border-radius:0 4px 4px 0;background:linear-gradient(#fefefe,#f6f5f4 45%,#e9e8e6);"></div><svg class="ic" style="left:137.5px;top:103.500px" width="9" height="6" viewBox="0 0 9 6"><path d="M1 1l3.500 3.500 3.500-3.500" stroke="#1e1e1e" stroke-width="1.500" fill="none"/></svg><div class="t" style="left:21.76px;top:97.10px;font-size:13px;letter-spacing:0.323px;color:#1a1a1a;font-weight:normal;" id="c0">Default Style</div>
<div style="left:157.0px;top:96px;width:1px;height:22px;background:#c4c2be;"></div><div style="left:158.0px;top:96px;width:1px;height:22px;background:#f8f8f7;"></div>
<div style="left:163px;top:95px;width:111px;height:21px;border:1px solid #6f6b67;border-right:none;border-radius:3.5px 0 0 3.5px;background:linear-gradient(#e4e3e1 0,#fbfbfb 2px,#fff 4px);"></div><div style="left:276px;top:95px;width:20px;height:21px;border:1px solid #908c88;border-radius:0 4px 4px 0;background:linear-gradient(#fefefe,#f6f5f4 45%,#e9e8e6);"></div><svg class="ic" style="left:282.5px;top:103.500px" width="9" height="6" viewBox="0 0 9 6"><path d="M1 1l3.500 3.500 3.500-3.500" stroke="#1e1e1e" stroke-width="1.500" fill="none"/></svg><div class="t" style="left:166.2px;top:97.10px;font-size:13px;letter-spacing:0.3px;color:#1a1a1a;font-weight:normal;" id="c1">Liberation Serif</div>
<div style="left:302.0px;top:96px;width:1px;height:22px;background:#c4c2be;"></div><div style="left:303.0px;top:96px;width:1px;height:22px;background:#f8f8f7;"></div>
<div style="left:308px;top:95px;width:38px;height:21px;border:1px solid #6f6b67;border-right:none;border-radius:3.5px 0 0 3.5px;background:linear-gradient(#e4e3e1 0,#fbfbfb 2px,#fff 4px);"></div><div style="left:348px;top:95px;width:20px;height:21px;border:1px solid #908c88;border-radius:0 4px 4px 0;background:linear-gradient(#fefefe,#f6f5f4 45%,#e9e8e6);"></div><svg class="ic" style="left:354.5px;top:103.500px" width="9" height="6" viewBox="0 0 9 6"><path d="M1 1l3.500 3.500 3.500-3.500" stroke="#1e1e1e" stroke-width="1.500" fill="none"/></svg><div class="t" style="left:312.2px;top:97.10px;font-size:13px;letter-spacing:1.1px;color:#1a1a1a;font-weight:normal;" id="c2">12</div>
<div style="left:374.0px;top:96px;width:1px;height:22px;background:#c4c2be;"></div><div style="left:375.0px;top:96px;width:1px;height:22px;background:#f8f8f7;"></div>
<svg class="ic" style="left:383.0px;top:94.0px" width="24" height="24" viewBox="0 0 24 24"><path d="M8.58 18.8Q6.09 18.8 4.69 17.7Q3.3 16.59 3.3 14.59Q3.3 12.42 5.03 11.28Q6.77 10.14 10.06 10.12L13.76 10.06V9.35Q13.76 7.98 13.17 7.32Q12.58 6.65 11.25 6.65Q10.02 6.65 9.44 7.11Q8.86 7.57 8.72 8.63L4.08 8.45Q4.5 6.41 6.37 5.35Q8.23 4.3 11.44 4.3Q14.69 4.3 16.45 5.61Q18.21 6.91 18.21 9.31V14.41Q18.21 15.58 18.53 16.03Q18.86 16.47 19.62 16.47Q20.12 16.47 20.6 16.4V18.36Q20.2 18.44 19.89 18.5Q19.57 18.57 19.25 18.61Q18.94 18.64 18.58 18.67Q18.22 18.7 17.75 18.7Q16.07 18.7 15.27 18.02Q14.47 17.35 14.31 16.05H14.22Q12.35 18.8 8.58 18.8ZM13.76 12.07 11.47 12.09Q9.92 12.14 9.27 12.37Q8.62 12.6 8.28 13.06Q7.94 13.53 7.94 14.3Q7.94 15.3 8.5 15.78Q9.07 16.27 10 16.27Q11.05 16.27 11.91 15.8Q12.77 15.34 13.26 14.52Q13.76 13.7 13.76 12.78Z" fill="url(#gChar)" stroke="#2c2c2b" stroke-width="0.9" stroke-linejoin="round"/><path d="M4 19.600h16.800" stroke="#000" stroke-width=".6" opacity=".12"/></svg>
<svg class="ic" style="left:416.5px;top:94.0px" width="24" height="24" viewBox="0 0 24 24"><path d="M17.38 17.19 19.47 17.55 19.32 18.2H14.04L14.58 15.95Q11.45 18.5 8.86 18.5Q6.62 18.5 5.26 17.22Q3.9 15.93 3.9 13.68Q3.9 11.16 5.32 8.96Q6.73 6.77 9.1 5.53Q11.47 4.3 14.25 4.3Q16.49 4.3 18.47 4.91L19.3 4.42H20.3ZM16.84 6.13Q16.12 5.74 15.49 5.59Q14.86 5.44 13.93 5.44Q12.08 5.44 10.54 6.53Q8.99 7.62 8.1 9.46Q7.21 11.31 7.21 13.31Q7.21 14.85 8.03 15.78Q8.84 16.7 10.25 16.7Q12.34 16.7 14.82 14.69Z" fill="url(#gChar)" stroke="#2c2c2b" stroke-width="1.0" stroke-linejoin="round"/></svg>
<svg class="ic" style="left:449.0px;top:94.0px" width="24" height="24" viewBox="0 0 24 24"><path d="M9.93 18.2Q7.82 18.2 6.76 17.13Q5.7 16.07 5.7 14.21Q5.7 12.13 7.13 11.01Q8.56 9.9 11.74 9.83L14.88 9.78V9.04Q14.88 7.41 14.15 6.7Q13.43 6 11.88 6Q10.32 6 9.6 6.51Q8.89 7.01 8.75 8.13L6.32 7.92Q6.92 4.3 11.93 4.3Q14.57 4.3 15.9 5.46Q17.23 6.62 17.23 8.81V14.58Q17.23 15.57 17.5 16.08Q17.77 16.58 18.54 16.58Q18.87 16.58 19.3 16.49V17.88Q18.42 18.08 17.5 18.08Q16.21 18.08 15.62 17.43Q15.03 16.78 14.96 15.39H14.88Q13.99 16.92 12.8 17.56Q11.62 18.2 9.93 18.2ZM10.46 16.53Q11.74 16.53 12.73 15.97Q13.73 15.41 14.3 14.44Q14.88 13.47 14.88 12.44V11.34L12.33 11.39Q10.69 11.41 9.84 11.71Q9 12.01 8.54 12.63Q8.09 13.24 8.09 14.25Q8.09 15.34 8.71 15.93Q9.32 16.53 10.46 16.53Z" fill="url(#gChar)" stroke="#2c2c2b" stroke-width="0.8" stroke-linejoin="round"/><rect x="5.400" y="20.400" width="14.200" height="2.100" rx=".8" fill="#6a6a68" stroke="#3a3a39" stroke-width=".6"/></svg>
<svg class="ic" style="left:482.0px;top:94.0px" width="24" height="24" viewBox="0 0 24 24"><path d="M9.5 18.5Q7.4 18.5 6.35 17.41Q5.3 16.32 5.3 14.42Q5.3 12.3 6.72 11.16Q8.14 10.02 11.29 9.94L14.41 9.89V9.15Q14.41 7.48 13.69 6.76Q12.97 6.03 11.43 6.03Q9.88 6.03 9.18 6.55Q8.47 7.07 8.33 8.21L5.92 8Q6.51 4.3 11.49 4.3Q14.1 4.3 15.43 5.48Q16.75 6.67 16.75 8.91V14.8Q16.75 15.82 17.02 16.33Q17.29 16.84 18.04 16.84Q18.38 16.84 18.8 16.75V18.17Q17.93 18.37 17.02 18.37Q15.73 18.37 15.15 17.71Q14.57 17.04 14.49 15.63H14.41Q13.53 17.2 12.35 17.85Q11.18 18.5 9.5 18.5ZM10.02 16.79Q11.29 16.79 12.28 16.22Q13.27 15.65 13.84 14.66Q14.41 13.67 14.41 12.61V11.49L11.88 11.54Q10.25 11.56 9.41 11.87Q8.57 12.17 8.12 12.8Q7.67 13.44 7.67 14.46Q7.67 15.58 8.28 16.18Q8.89 16.79 10.02 16.79Z" fill="url(#gCharL)" stroke="#2c2c2b" stroke-width="0.8" stroke-linejoin="round"/><rect x="2.500" y="9.800" width="19.300" height="2" rx=".8" fill="#5a5a58" stroke="#3a3a39" stroke-width=".5"/></svg>
<svg class="ic" style="left:514.0px;top:94.0px" width="24" height="24" viewBox="0 0 24 24"><path d="M5.59 18.5Q3.45 18.5 2.38 17.41Q1.3 16.32 1.3 14.42Q1.3 12.3 2.75 11.16Q4.2 10.02 7.43 9.94L10.61 9.89V9.15Q10.61 7.48 9.88 6.76Q9.14 6.03 7.57 6.03Q5.98 6.03 5.26 6.55Q4.54 7.07 4.4 8.21L1.93 8Q2.53 4.3 7.62 4.3Q10.3 4.3 11.65 5.48Q13 6.67 13 8.91V14.8Q13 15.82 13.28 16.33Q13.55 16.84 14.33 16.84Q14.67 16.84 15.1 16.75V18.17Q14.21 18.37 13.28 18.37Q11.96 18.37 11.37 17.71Q10.77 17.04 10.69 15.63H10.61Q9.71 17.2 8.51 17.85Q7.31 18.5 5.59 18.5ZM6.13 16.79Q7.43 16.79 8.44 16.22Q9.45 15.65 10.03 14.66Q10.61 13.67 10.61 12.61V11.49L8.03 11.54Q6.36 11.56 5.5 11.87Q4.65 12.17 4.19 12.8Q3.73 13.44 3.73 14.46Q3.73 15.58 4.35 16.18Q4.97 16.79 6.13 16.79Z" fill="url(#gChar)" stroke="#2c2c2b" stroke-width="0.8" stroke-linejoin="round"/><path d="M23.3 9.38Q23.3 14.2 20.23 14.2Q19.28 14.2 18.66 13.82Q18.03 13.44 17.63 12.6H17.62Q17.62 12.86 17.59 13.4Q17.56 13.94 17.54 14.03H16.2Q16.25 13.57 16.25 12.13V1.4H17.63V5Q17.63 5.55 17.6 6.3H17.63Q18.02 5.42 18.66 5.03Q19.29 4.65 20.23 4.65Q21.81 4.65 22.56 5.83Q23.3 7 23.3 9.38ZM21.84 9.43Q21.84 7.5 21.38 6.67Q20.92 5.83 19.88 5.83Q18.71 5.83 18.17 6.72Q17.63 7.6 17.63 9.53Q17.63 11.34 18.16 12.2Q18.68 13.07 19.86 13.07Q20.91 13.07 21.38 12.21Q21.84 11.36 21.84 9.43Z" fill="url(#gBlueCh)" stroke="#2358aa" stroke-width=".7" stroke-linejoin="round"/></svg>
<svg class="ic" style="left:547.0px;top:94.0px" width="24" height="24" viewBox="0 0 24 24"><path d="M5.63 18.5Q3.52 18.5 2.46 17.41Q1.4 16.32 1.4 14.42Q1.4 12.3 2.83 11.16Q4.26 10.02 7.44 9.94L10.58 9.89V9.15Q10.58 7.48 9.85 6.76Q9.13 6.03 7.58 6.03Q6.02 6.03 5.3 6.55Q4.59 7.07 4.45 8.21L2.02 8Q2.62 4.3 7.63 4.3Q10.27 4.3 11.6 5.48Q12.93 6.67 12.93 8.91V14.8Q12.93 15.82 13.2 16.33Q13.47 16.84 14.24 16.84Q14.57 16.84 15 16.75V18.17Q14.12 18.37 13.2 18.37Q11.91 18.37 11.32 17.71Q10.73 17.04 10.66 15.63H10.58Q9.69 17.2 8.5 17.85Q7.32 18.5 5.63 18.5ZM6.16 16.79Q7.44 16.79 8.43 16.22Q9.43 15.65 10 14.66Q10.58 13.67 10.58 12.61V11.49L8.03 11.54Q6.39 11.56 5.54 11.87Q4.7 12.17 4.24 12.8Q3.79 13.44 3.79 14.46Q3.79 15.58 4.41 16.18Q5.02 16.79 6.16 16.79Z" fill="url(#gChar)" stroke="#2c2c2b" stroke-width="0.8" stroke-linejoin="round"/><path d="M23.4 17.48Q23.4 22.3 20.16 22.3Q19.16 22.3 18.49 21.92Q17.83 21.54 17.41 20.7H17.4Q17.4 20.96 17.37 21.5Q17.33 22.04 17.32 22.13H15.9Q15.95 21.67 15.95 20.23V9.5H17.41V13.1Q17.41 13.65 17.38 14.4H17.41Q17.82 13.52 18.49 13.13Q19.17 12.75 20.16 12.75Q21.83 12.75 22.61 13.93Q23.4 15.1 23.4 17.48ZM21.86 17.53Q21.86 15.6 21.37 14.77Q20.88 13.93 19.78 13.93Q18.55 13.93 17.98 14.82Q17.41 15.7 17.41 17.63Q17.41 19.44 17.97 20.3Q18.52 21.17 19.77 21.17Q20.88 21.17 21.37 20.31Q21.86 19.46 21.86 17.53Z" fill="url(#gBlueCh)" stroke="#2358aa" stroke-width=".7" stroke-linejoin="round"/></svg>
<svg class="ic" style="left:580.5px;top:94.0px" width="24" height="24" viewBox="0 0 24 24"><path d="M10.32 19.8Q8.17 19.8 7.08 18.71Q6 17.62 6 15.72Q6 13.6 7.46 12.46Q8.92 11.32 12.17 11.24L15.38 11.19V10.45Q15.38 8.78 14.64 8.06Q13.9 7.33 12.32 7.33Q10.72 7.33 9.99 7.85Q9.26 8.37 9.12 9.51L6.63 9.3Q7.24 5.6 12.37 5.6Q15.06 5.6 16.42 6.78Q17.79 7.97 17.79 10.21V16.1Q17.79 17.12 18.06 17.63Q18.34 18.14 19.12 18.14Q19.46 18.14 19.9 18.05V19.47Q19 19.67 18.06 19.67Q16.74 19.67 16.14 19.01Q15.54 18.34 15.46 16.93H15.38Q14.47 18.5 13.26 19.15Q12.05 19.8 10.32 19.8ZM10.86 18.09Q12.17 18.09 13.19 17.52Q14.21 16.95 14.79 15.96Q15.38 14.97 15.38 13.91V12.79L12.78 12.84Q11.1 12.86 10.23 13.17Q9.37 13.47 8.91 14.1Q8.44 14.74 8.44 15.76Q8.44 16.88 9.07 17.48Q9.7 18.09 10.86 18.09Z" fill="#7e7e7c" opacity=".9"/><path d="M8.97 18.5Q6.89 18.5 5.84 17.41Q4.8 16.32 4.8 14.42Q4.8 12.3 6.21 11.16Q7.62 10.02 10.75 9.94L13.84 9.89V9.15Q13.84 7.48 13.13 6.76Q12.42 6.03 10.89 6.03Q9.35 6.03 8.65 6.55Q7.95 7.07 7.81 8.21L5.41 8Q6 4.3 10.94 4.3Q13.54 4.3 14.85 5.48Q16.16 6.67 16.16 8.91V14.8Q16.16 15.82 16.43 16.33Q16.7 16.84 17.45 16.84Q17.78 16.84 18.2 16.75V18.17Q17.33 18.37 16.43 18.37Q15.16 18.37 14.58 17.71Q14 17.04 13.92 15.63H13.84Q12.96 17.2 11.8 17.85Q10.63 18.5 8.97 18.5ZM9.49 16.79Q10.75 16.79 11.73 16.22Q12.71 15.65 13.28 14.66Q13.84 13.67 13.84 12.61V11.49L11.33 11.54Q9.72 11.56 8.88 11.87Q8.05 12.17 7.6 12.8Q7.16 13.44 7.16 14.46Q7.16 15.58 7.76 16.18Q8.37 16.79 9.49 16.79Z" fill="url(#gChar)" stroke="#2c2c2b" stroke-width="0.8" stroke-linejoin="round"/></svg>
<div style="left:612.5px;top:96px;width:1px;height:22px;background:#c4c2be;"></div><div style="left:613.5px;top:96px;width:1px;height:22px;background:#f8f8f7;"></div>
<svg class="ic" style="left:621.0px;top:94.0px" width="24" height="24" viewBox="0 0 24 24"><path d="M9.72 15.2Q7.57 15.2 6.48 14.15Q5.4 13.1 5.4 11.27Q5.4 9.22 6.86 8.12Q8.32 7.02 11.57 6.95L14.78 6.9V6.18Q14.78 4.56 14.04 3.87Q13.3 3.17 11.72 3.17Q10.12 3.17 9.39 3.67Q8.66 4.17 8.52 5.27L6.03 5.07Q6.64 1.5 11.77 1.5Q14.46 1.5 15.82 2.64Q17.19 3.78 17.19 5.94V11.63Q17.19 12.61 17.46 13.11Q17.74 13.6 18.52 13.6Q18.86 13.6 19.3 13.51V14.88Q18.4 15.08 17.46 15.08Q16.14 15.08 15.54 14.44Q14.94 13.8 14.86 12.43H14.78Q13.87 13.94 12.66 14.57Q11.45 15.2 9.72 15.2ZM10.26 13.55Q11.57 13.55 12.59 13Q13.61 12.45 14.19 11.49Q14.78 10.54 14.78 9.52V8.44L12.18 8.48Q10.5 8.51 9.63 8.8Q8.77 9.09 8.31 9.71Q7.84 10.32 7.84 11.3Q7.84 12.38 8.47 12.97Q9.1 13.55 10.26 13.55Z" fill="#5f9ae6" stroke="#1f56ac" stroke-width="1" stroke-linejoin="round"/><rect x="-.2" y="18" width="24.300" height="6" fill="#800000"/></svg>
<svg class="ic" style="left:654.5px;top:104px" width="7" height="4" viewBox="0 0 7 4"><path d="M0.5 0h6L3.5 3.5z" fill="#000"/></svg>
<svg class="ic" style="left:671.0px;top:94.0px" width="24" height="24" viewBox="0 0 24 24"><rect x="-.2" y="18" width="24.300" height="6" fill="#ffff00"/><path d="M10.600 4.300q3-2.500 6.500-3.200l7-.1q-1.500 3-4 5.300l-4.800 2.700z" fill="url(#gMark)" stroke="#a87f0a" stroke-width=".6" stroke-linejoin="round"/><path d="M8 6.700l2.900-2.700 4.900 4.900-2.900 2.700z" fill="#5a5a58" stroke="#343432" stroke-width=".7"/><path d="M8.300 6.400l4.700 4.700-4 4h-4.800v-4.700z" fill="#f6e36a" stroke="#b08a0e" stroke-width=".8" stroke-linejoin="round"/><path d="M5 11l3.500-3.500" stroke="#fdf6b8" stroke-width=".9"/></svg>
<svg class="ic" style="left:704.5px;top:104px" width="7" height="4" viewBox="0 0 7 4"><path d="M0.5 0h6L3.5 3.5z" fill="#000"/></svg>
<div style="left:720.5px;top:96px;width:1px;height:22px;background:#c4c2be;"></div><div style="left:721.5px;top:96px;width:1px;height:22px;background:#f8f8f7;"></div>
<div style="left:727px;top:90px;width:29px;height:31px;border:1px solid #8a8884;border-radius:4px;background:linear-gradient(#f9f9f8,#f1f0ef);"></div>
<svg class="ic" style="left:730.0px;top:94.0px" width="24" height="24" viewBox="0 0 24 24"><rect x="2.20" y="3.40" width="14.80" height="2.2" rx="1.1" fill="url(#gLine)" stroke="#30302f" stroke-width=".5"/><rect x="2.20" y="8.30" width="19.80" height="2.2" rx="1.1" fill="url(#gLine)" stroke="#30302f" stroke-width=".5"/><rect x="2.20" y="13.40" width="16.80" height="2.2" rx="1.1" fill="url(#gLine)" stroke="#30302f" stroke-width=".5"/><rect x="2.20" y="18.30" width="11.70" height="2.2" rx="1.1" fill="url(#gLine)" stroke="#30302f" stroke-width=".5"/></svg>
<svg class="ic" style="left:763.0px;top:94.0px" width="24" height="24" viewBox="0 0 24 24"><rect x="5.40" y="3.40" width="13.60" height="2.2" rx="1.1" fill="url(#gLine)" stroke="#30302f" stroke-width=".5"/><rect x="2.30" y="8.30" width="19.80" height="2.2" rx="1.1" fill="url(#gLine)" stroke="#30302f" stroke-width=".5"/><rect x="4.30" y="13.40" width="15.80" height="2.2" rx="1.1" fill="url(#gLine)" stroke="#30302f" stroke-width=".5"/><rect x="6.30" y="18.30" width="11.80" height="2.2" rx="1.1" fill="url(#gLine)" stroke="#30302f" stroke-width=".5"/></svg>
<svg class="ic" style="left:796.0px;top:94.0px" width="24" height="24" viewBox="0 0 24 24"><rect x="7.30" y="3.40" width="14.70" height="2.2" rx="1.1" fill="url(#gLine)" stroke="#30302f" stroke-width=".5"/><rect x="2.30" y="8.30" width="19.70" height="2.2" rx="1.1" fill="url(#gLine)" stroke="#30302f" stroke-width=".5"/><rect x="5.20" y="13.40" width="16.80" height="2.2" rx="1.1" fill="url(#gLine)" stroke="#30302f" stroke-width=".5"/><rect x="10.20" y="18.30" width="11.80" height="2.2" rx="1.1" fill="url(#gLine)" stroke="#30302f" stroke-width=".5"/></svg>
<svg class="ic" style="left:829.0px;top:94.0px" width="24" height="24" viewBox="0 0 24 24"><rect x="2.20" y="3.40" width="19.80" height="2.2" rx="1.1" fill="url(#gLine)" stroke="#30302f" stroke-width=".5"/><rect x="2.20" y="8.30" width="19.80" height="2.2" rx="1.1" fill="url(#gLine)" stroke="#30302f" stroke-width=".5"/><rect x="2.20" y="13.40" width="19.80" height="2.2" rx="1.1" fill="url(#gLine)" stroke="#30302f" stroke-width=".5"/><rect x="2.20" y="18.30" width="19.80" height="2.2" rx="1.1" fill="url(#gLine)" stroke="#30302f" stroke-width=".5"/></svg>
<div style="left:860.5px;top:96px;width:1px;height:22px;background:#c4c2be;"></div><div style="left:861.5px;top:96px;width:1px;height:22px;background:#f8f8f7;"></div>
<svg class="ic" style="left:868.5px;top:94.0px" width="24" height="24" viewBox="0 0 24 24"><path d="M4.500 1.600l3.900 4.200h-2.400v11.200h2.400l-3.900 4.200-3.900-4.200h2.400v-11.200h-2.400z" fill="url(#gOrA)" stroke="#d46f10" stroke-width=".9" stroke-linejoin="round"/><path d="M4.500 3.200l1.800 2h-3.600zM4.500 19.600l1.800-2h-3.600z" fill="#fdebd6"/><rect x="9.70" y="4.40" width="13.70" height="2.2" rx="1.1" fill="url(#gLine)" stroke="#30302f" stroke-width=".5"/><rect x="9.70" y="10.40" width="13.70" height="2.2" rx="1.1" fill="url(#gLine)" stroke="#30302f" stroke-width=".5"/><rect x="9.70" y="16.30" width="13.70" height="2.2" rx="1.1" fill="url(#gLine)" stroke="#30302f" stroke-width=".5"/></svg>
<svg class="ic" style="left:903.0px;top:104px" width="7" height="4" viewBox="0 0 7 4"><path d="M0.5 0h6L3.5 3.5z" fill="#000"/></svg>
<div style="left:919.0px;top:96px;width:1px;height:22px;background:#c4c2be;"></div><div style="left:920.0px;top:96px;width:1px;height:22px;background:#f8f8f7;"></div>
<svg class="ic" style="left:927.0px;top:94.0px" width="24" height="24" viewBox="0 0 24 24"><circle cx="3.400" cy="5.5" r="2" fill="#9dbdee" stroke="#3f74c4" stroke-width="1"/><circle cx="3.400" cy="15.5" r="2" fill="#9dbdee" stroke="#3f74c4" stroke-width="1"/><rect x="8.40" y="3.40" width="14.40" height="2.2" rx="1.1" fill="url(#gLine)" stroke="#30302f" stroke-width=".5"/><rect x="8.40" y="8.30" width="7.30" height="2.2" rx="1.1" fill="url(#gLine)" stroke="#30302f" stroke-width=".5"/><rect x="8.40" y="13.40" width="14.40" height="2.2" rx="1.1" fill="url(#gLine)" stroke="#30302f" stroke-width=".5"/><rect x="8.40" y="18.30" width="7.30" height="2.2" rx="1.1" fill="url(#gLine)" stroke="#30302f" stroke-width=".5"/></svg>
<svg class="ic" style="left:960.5px;top:104px" width="7" height="4" viewBox="0 0 7 4"><path d="M0.5 0h6L3.5 3.5z" fill="#000"/></svg>
<svg class="ic" style="left:977.0px;top:94.0px" width="24" height="24" viewBox="0 0 24 24"><path d="M3.96 9.09 5.2 9.2V9.6H1.2V9.2L2.43 9.09V4.38L1.21 4.73V4.33L3.21 3.3H3.96ZM5.5 20.8H0.9V19.94Q1.37 19.52 1.76 19.18Q2.63 18.46 3.03 18.05Q3.43 17.63 3.61 17.19Q3.8 16.74 3.8 16.18Q3.8 15.68 3.51 15.37Q3.23 15.07 2.75 15.07Q2.42 15.07 2.22 15.13Q2.01 15.19 1.85 15.3L1.61 16.19H1.14V14.8Q1.58 14.71 1.99 14.66Q2.4 14.6 2.89 14.6Q4.09 14.6 4.72 15.02Q5.36 15.43 5.36 16.2Q5.36 16.68 5.17 17.07Q4.98 17.46 4.57 17.83Q4.16 18.2 2.95 19.04Q2.48 19.36 1.94 19.77H5.5Z" fill="#1e4a98"/><rect x="8.30" y="3.40" width="14.70" height="2.2" rx="1.1" fill="url(#gLine)" stroke="#30302f" stroke-width=".5"/><rect x="8.30" y="8.30" width="7.40" height="2.2" rx="1.1" fill="url(#gLine)" stroke="#30302f" stroke-width=".5"/><rect x="8.30" y="13.40" width="14.70" height="2.2" rx="1.1" fill="url(#gLine)" stroke="#30302f" stroke-width=".5"/><rect x="8.30" y="18.30" width="7.40" height="2.2" rx="1.1" fill="url(#gLine)" stroke="#30302f" stroke-width=".5"/></svg>
<svg class="ic" style="left:1010.5px;top:104px" width="7" height="4" viewBox="0 0 7 4"><path d="M0.5 0h6L3.5 3.5z" fill="#000"/></svg>
<svg class="ic" style="left:1028.0px;top:94.0px" width="24" height="24" viewBox="0 0 24 24"><rect x="1.20" y="3.40" width="22.60" height="2.2" rx="1.1" fill="url(#gLine)" stroke="#30302f" stroke-width=".5"/><rect x="9.60" y="8.30" width="14.20" height="2.2" rx="1.1" fill="url(#gLine)" stroke="#30302f" stroke-width=".5"/><rect x="9.60" y="13.40" width="14.20" height="2.2" rx="1.1" fill="url(#gLine)" stroke="#30302f" stroke-width=".5"/><rect x="1.20" y="18.30" width="22.60" height="2.2" rx="1.1" fill="url(#gLine)" stroke="#30302f" stroke-width=".5"/><path d="M1.8 8.6L5.6 12l-3.8 3.400" fill="none" stroke="#de7414" stroke-width="2.300" stroke-linejoin="miter"/><path d="M1.8 8.6L5.6 12l-3.8 3.400" fill="none" stroke="#f8c48c" stroke-width=".7"/></svg>
<svg class="ic" style="left:1061.0px;top:94.0px" width="24" height="24" viewBox="0 0 24 24"><rect x="1.30" y="3.40" width="22.70" height="2.2" rx="1.1" fill="url(#gLine)" stroke="#30302f" stroke-width=".5"/><rect x="9.70" y="8.30" width="14.30" height="2.2" rx="1.1" fill="url(#gLine)" stroke="#30302f" stroke-width=".5"/><rect x="9.70" y="13.40" width="14.30" height="2.2" rx="1.1" fill="url(#gLine)" stroke="#30302f" stroke-width=".5"/><rect x="1.30" y="18.30" width="22.70" height="2.2" rx="1.1" fill="url(#gLine)" stroke="#30302f" stroke-width=".5"/><path d="M6 8.6L2.2 12l3.8 3.400" fill="none" stroke="#de7414" stroke-width="2.300" stroke-linejoin="miter"/><path d="M6 8.6L2.2 12l3.8 3.400" fill="none" stroke="#f8c48c" stroke-width=".7"/></svg>
<div style="left:3px;top:126px;width:1325px;height:674px;background:#edeceb;"></div>
<svg class="ic" style="left:11px;top:134px" width="8" height="8" viewBox="0 0 8 8"><path d="M1 1.200v5h6" stroke="#7d7b77" stroke-width="2" fill="none"/></svg>
<svg class="ic" style="left:0;top:0;will-change:transform" width="1331" height="160" viewBox="0 0 1331 160"><rect x="368" y="130" width="534" height="15" fill="#fff"/><rect x="309.5" y="130.5" width="59" height="14" fill="#e6e5e3" stroke="#a9a7a3"/><rect x="901.5" y="130.5" width="60" height="14" fill="#e6e5e3" stroke="#a9a7a3"/><path d="M311.5 135v4" stroke="#a9a7a3" stroke-width="1"/><path d="M321.5 135v4" stroke="#a9a7a3" stroke-width="1"/><path d="M331.5 133v7" stroke="#9f9d99" stroke-width="1"/><path d="M340.5 135v4" stroke="#a9a7a3" stroke-width="1"/><path d="M350.5 135v4" stroke="#a9a7a3" stroke-width="1"/><path d="M359.5 135v4" stroke="#a9a7a3" stroke-width="1"/><path d="M379.5 135v4" stroke="#a9a7a3" stroke-width="1"/><path d="M388.5 135v4" stroke="#a9a7a3" stroke-width="1"/><path d="M398.5 135v4" stroke="#a9a7a3" stroke-width="1"/><path d="M407.5 133v7" stroke="#9f9d99" stroke-width="1"/><path d="M417.5 135v4" stroke="#a9a7a3" stroke-width="1"/><path d="M427.5 135v4" stroke="#a9a7a3" stroke-width="1"/><path d="M436.5 135v4" stroke="#a9a7a3" stroke-width="1"/><text x="445.8" y="141" font-size="9.8" fill="#8b8985" text-anchor="middle" font-family='"Liberation Sans", sans-serif'>1</text><path d="M446.5 131v1.5M446.5 143v1.5" stroke="#a5a39f" stroke-width="1"/><path d="M455.5 135v4" stroke="#a9a7a3" stroke-width="1"/><path d="M465.5 135v4" stroke="#a9a7a3" stroke-width="1"/><path d="M475.5 135v4" stroke="#a9a7a3" stroke-width="1"/><path d="M484.5 133v7" stroke="#9f9d99" stroke-width="1"/><path d="M494.5 135v4" stroke="#a9a7a3" stroke-width="1"/><path d="M503.5 135v4" stroke="#a9a7a3" stroke-width="1"/><path d="M513.5 135v4" stroke="#a9a7a3" stroke-width="1"/><text x="522.6" y="141" font-size="9.8" fill="#8b8985" text-anchor="middle" font-family='"Liberation Sans", sans-serif'>2</text><path d="M523.5 131v1.5M523.5 143v1.5" stroke="#a5a39f" stroke-width="1"/><path d="M532.5 135v4" stroke="#a9a7a3" stroke-width="1"/><path d="M542.5 135v4" stroke="#a9a7a3" stroke-width="1"/><path d="M551.5 135v4" stroke="#a9a7a3" stroke-width="1"/><path d="M561.5 133v7" stroke="#9f9d99" stroke-width="1"/><path d="M571.5 135v4" stroke="#a9a7a3" stroke-width="1"/><path d="M580.5 135v4" stroke="#a9a7a3" stroke-width="1"/><path d="M590.5 135v4" stroke="#a9a7a3" stroke-width="1"/><text x="599.4" y="141" font-size="9.8" fill="#8b8985" text-anchor="middle" font-family='"Liberation Sans", sans-serif'>3</text><path d="M599.5 131v1.5M599.5 143v1.5" stroke="#a5a39f" stroke-width="1"/><path d="M609.5 135v4" stroke="#a9a7a3" stroke-width="1"/><path d="M619.5 135v4" stroke="#a9a7a3" stroke-width="1"/><path d="M628.5 135v4" stroke="#a9a7a3" stroke-width="1"/><path d="M638.5 133v7" stroke="#9f9d99" stroke-width="1"/><path d="M647.5 135v4" stroke="#a9a7a3" stroke-width="1"/><path d="M657.5 135v4" stroke="#a9a7a3" stroke-width="1"/><path d="M667.5 135v4" stroke="#a9a7a3" stroke-width="1"/><text x="676.2" y="141" font-size="9.8" fill="#8b8985" text-anchor="middle" font-family='"Liberation Sans", sans-serif'>4</text><path d="M676.5 131v1.5M676.5 143v1.5" stroke="#a5a39f" stroke-width="1"/><path d="M686.5 135v4" stroke="#a9a7a3" stroke-width="1"/><path d="M695.5 135v4" stroke="#a9a7a3" stroke-width="1"/><path d="M705.5 135v4" stroke="#a9a7a3" stroke-width="1"/><path d="M715.5 133v7" stroke="#9f9d99" stroke-width="1"/><path d="M724.5 135v4" stroke="#a9a7a3" stroke-width="1"/><path d="M734.5 135v4" stroke="#a9a7a3" stroke-width="1"/><path d="M743.5 135v4" stroke="#a9a7a3" stroke-width="1"/><text x="753.0" y="141" font-size="9.8" fill="#8b8985" text-anchor="middle" font-family='"Liberation Sans", sans-serif'>5</text><path d="M753.5 131v1.5M753.5 143v1.5" stroke="#a5a39f" stroke-width="1"/><path d="M763.5 135v4" stroke="#a9a7a3" stroke-width="1"/><path d="M772.5 135v4" stroke="#a9a7a3" stroke-width="1"/><path d="M782.5 135v4" stroke="#a9a7a3" stroke-width="1"/><path d="M791.5 133v7" stroke="#9f9d99" stroke-width="1"/><path d="M801.5 135v4" stroke="#a9a7a3" stroke-width="1"/><path d="M811.5 135v4" stroke="#a9a7a3" stroke-width="1"/><path d="M820.5 135v4" stroke="#a9a7a3" stroke-width="1"/><text x="829.8" y="141" font-size="9.8" fill="#8b8985" text-anchor="middle" font-family='"Liberation Sans", sans-serif'>6</text><path d="M830.5 131v1.5M830.5 143v1.5" stroke="#a5a39f" stroke-width="1"/><path d="M839.5 135v4" stroke="#a9a7a3" stroke-width="1"/><path d="M849.5 135v4" stroke="#a9a7a3" stroke-width="1"/><path d="M859.5 135v4" stroke="#a9a7a3" stroke-width="1"/><path d="M868.5 133v7" stroke="#9f9d99" stroke-width="1"/><path d="M878.5 135v4" stroke="#a9a7a3" stroke-width="1"/><path d="M887.5 135v4" stroke="#a9a7a3" stroke-width="1"/><path d="M897.5 135v4" stroke="#a9a7a3" stroke-width="1"/><text x="906.6" y="141" font-size="9.8" fill="#8b8985" text-anchor="middle" font-family='"Liberation Sans", sans-serif'>7</text><path d="M907.5 131v1.5M907.5 143v1.5" stroke="#a5a39f" stroke-width="1"/><path d="M916.5 135v4" stroke="#a9a7a3" stroke-width="1"/><path d="M926.5 135v4" stroke="#a9a7a3" stroke-width="1"/><path d="M935.5 135v4" stroke="#a9a7a3" stroke-width="1"/><path d="M945.5 133v7" stroke="#9f9d99" stroke-width="1"/><path d="M955.5 135v4" stroke="#a9a7a3" stroke-width="1"/><path d="M407.5 142.5v3M405.0 145.5h5" stroke="#8f8d89" stroke-width="1" fill="none"/><path d="M446.5 142.5v3M444.0 145.5h5" stroke="#8f8d89" stroke-width="1" fill="none"/><path d="M484.5 142.5v3M482.0 145.5h5" stroke="#8f8d89" stroke-width="1" fill="none"/><path d="M523.5 142.5v3M521.0 145.5h5" stroke="#8f8d89" stroke-width="1" fill="none"/><path d="M561.5 142.5v3M559.0 145.5h5" stroke="#8f8d89" stroke-width="1" fill="none"/><path d="M599.5 142.5v3M597.0 145.5h5" stroke="#8f8d89" stroke-width="1" fill="none"/><path d="M638.5 142.5v3M636.0 145.5h5" stroke="#8f8d89" stroke-width="1" fill="none"/><path d="M676.5 142.5v3M674.0 145.5h5" stroke="#8f8d89" stroke-width="1" fill="none"/><path d="M715.5 142.5v3M713.0 145.5h5" stroke="#8f8d89" stroke-width="1" fill="none"/><path d="M753.5 142.5v3M751.0 145.5h5" stroke="#8f8d89" stroke-width="1" fill="none"/><path d="M791.5 142.5v3M789.0 145.5h5" stroke="#8f8d89" stroke-width="1" fill="none"/><path d="M830.5 142.5v3M828.0 145.5h5" stroke="#8f8d89" stroke-width="1" fill="none"/><path d="M868.5 142.5v3M866.0 145.5h5" stroke="#8f8d89" stroke-width="1" fill="none"/><path d="M365.5 130.5h8v2l-3 5 3 5v2.5h-8v-2.5l3-5-3-5z" fill="#f4f4f3" stroke="#8a8884" stroke-width="1"/><path d="M897.5 145.5v-4l4-4 4 4v4z" fill="#f4f4f3" stroke="#8a8884" stroke-width="1"/></svg>
<div style="left:308px;top:165px;width:654px;height:635px;background:#fff;box-shadow:0 0 0 1px #bcbbb9, 0 1px 5px 1px rgba(0,0,0,.2);"></div>
<div style="left:369px;top:215px;width:1px;height:11px;background:#cfcfcf;"></div><div style="left:359px;top:226px;width:11px;height:1px;background:#d4d4d4;"></div>
<div style="left:901px;top:215px;width:1px;height:11px;background:#cfcfcf;"></div><div style="left:901px;top:226px;width:11px;height:1px;background:#d4d4d4;"></div>
<div style="left:370px;top:226px;width:2px;height:14px;background:#000;"></div>
<div style="left:1268px;top:127px;width:15px;height:673px;background:#d4d3d1;box-shadow:inset 0 0 0 1px #a4a29e;"></div>
<div style="left:1268px;top:127px;width:13px;height:13px;border:1px solid #8d8b87;border-radius:4px 4px 0 0;background:linear-gradient(#fdfdfd,#eeedeb);"></div>
<svg class="ic" style="left:1271px;top:130px" width="9" height="7" viewBox="0 0 9 7"><path d="M1 5.5L4.5 2 8 5.5" stroke="#a6a4a0" stroke-width="1.4" fill="none"/></svg>
<div style="left:1268px;top:140px;width:13px;height:476px;border:1px solid #5f85bd;background:linear-gradient(90deg,#a9c5ea,#98b8e3 50%,#7fa4d8);"></div>
<div style="left:1273px;top:374px;width:6px;height:1px;background:#4f74ad;"></div><div style="left:1273px;top:377px;width:6px;height:1px;background:#4f74ad;"></div><div style="left:1273px;top:380px;width:6px;height:1px;background:#4f74ad;"></div>
<div style="left:1268px;top:786px;width:13px;height:13px;border:1px solid #8d8b87;border-radius:0 0 4px 4px;background:linear-gradient(#fdfdfd,#eeedeb);"></div>
<svg class="ic" style="left:1271px;top:790px" width="9" height="7" viewBox="0 0 9 7"><path d="M1 1.5L4.5 5 8 1.5" stroke="#2b2b2b" stroke-width="1.5" fill="none"/></svg>
<div style="left:1284px;top:126px;width:4px;height:674px;background:#f5f5f4;"></div>
<div style="left:1288px;top:126px;width:1px;height:674px;background:#b7b5b1;"></div>
<div style="left:1289px;top:126px;width:39px;height:674px;background:#edeceb;"></div>
<svg class="ic" style="left:1284px;top:446px" width="4" height="4" viewBox="0 0 4 4"><path d="M1 0.5v3L3.2 2z" fill="#8b8985"/></svg>
<svg class="ic" style="left:1284px;top:451px" width="4" height="4" viewBox="0 0 4 4"><path d="M1 0.5v3L3.2 2z" fill="#8b8985"/></svg>
<svg class="ic" style="left:1284px;top:456px" width="4" height="4" viewBox="0 0 4 4"><path d="M1 0.5v3L3.2 2z" fill="#8b8985"/></svg>
<svg class="ic" style="left:1284px;top:461px" width="4" height="4" viewBox="0 0 4 4"><path d="M1 0.5v3L3.2 2z" fill="#8b8985"/></svg>
<svg class="ic" style="left:1284px;top:466px" width="4" height="4" viewBox="0 0 4 4"><path d="M1 0.5v3L3.2 2z" fill="#8b8985"/></svg>
<svg class="ic" style="left:1284px;top:471px" width="4" height="4" viewBox="0 0 4 4"><path d="M1 0.5v3L3.2 2z" fill="#8b8985"/></svg>
<svg class="ic" style="left:1284px;top:476px" width="4" height="4" viewBox="0 0 4 4"><path d="M1 0.5v3L3.2 2z" fill="#8b8985"/></svg>
<svg class="ic" style="left:1300px;top:139px" width="16" height="14" viewBox="0 0 16 14"><path d="M4 3.5h6M4 5.8h6M4 8.1h6" stroke="#1d2b4f" stroke-width="1.1"/><path d="M7.5 9.3h6L10.5 12.3z" fill="#16213f"/></svg>
<div style="left:1297px;top:165px;width:23px;height:1px;background:#d6d5d2;"></div>
<div style="left:1292px;top:169px;width:30px;height:30px;border:1px solid #c9c7c3;border-radius:4px;background:#f1f0ef;"></div>
<svg class="ic" style="left:1296.0px;top:173.0px" width="24" height="24" viewBox="0 0 24 24"><path d="M7.500 8.600l9.300 7.200" stroke="#9d9d9b" stroke-width="4.400"/><path d="M8.53 2.30L9.61 3.35A4.9 4.9 0 1 1 3.79 1.79L5.25 1.42L4.44 4.44A1.7 1.7 0 0 0 7.72 5.32Z" fill="#f8f8f7" stroke="#9d9d9b" stroke-width=".9" stroke-linejoin="round"/><path d="M15.67 22.00L14.59 20.95A4.9 4.9 0 1 1 20.41 22.51L18.95 22.88L19.76 19.86A1.7 1.7 0 0 0 16.48 18.98Z" fill="#f8f8f7" stroke="#9d9d9b" stroke-width=".9" stroke-linejoin="round"/><path d="M6.800 8l10.700 8.300" stroke="#f8f8f7" stroke-width="2.700"/><path d="M8.500 8.700l8 6.200" stroke="#ffffff" stroke-width=".8" opacity=".9"/></svg>
<svg class="ic" style="left:1295.0px;top:209.0px" width="24" height="24" viewBox="0 0 24 24"><path d="M4 6.600v-4.600q0-1 1-1h16.200q1 0 1 1v4.600h-1.800q-.3-2.500-2-2.600h-3.200v19h-4v-19h-3.400q-1.700.1-2 2.600z" fill="url(#gTs)" stroke="#2a2a2a" stroke-width=".6"/><path d="M1 7l21.500 15.700h-21.500z" fill="url(#gTri)" stroke="#4e9a1e" stroke-width="1" stroke-linejoin="round"/><path d="M4.700 14.500l8 5.300h-8z" fill="#d8f0c4" stroke="#4e9a1e" stroke-width=".8" stroke-linejoin="round"/><path d="M4 21.600h1M7 21.600h1M10 21.600h1M13 21.600h1M16 21.600h1" stroke="#e08a1a" stroke-width=".9"/></svg>
<svg class="ic" style="left:1296.0px;top:242.0px" width="24" height="24" viewBox="0 0 24 24"><path d="M8.500 6l3.500-3.700 3.500 3.700" fill="none" stroke="#555553" stroke-width=".9"/><rect x="1.400" y="6.400" width="21" height="14.200" rx="2" fill="url(#gFrame)" stroke="#a86c06" stroke-width="1"/><rect x="4" y="9" width="15.800" height="9" fill="url(#gSky2)" stroke="#8a5a08" stroke-width=".7"/><path d="M6.500 18a2.800 2.800 0 0 1 5.600 0z" fill="#fff6b0"/><path d="M14.200 18q.2-2-.1-3.300l-2.300-2.500-1.800-.6 2 .1-.6-1.300 1.100 1.300 1.700 1.500.2-2.300-.8-1.400 1.100 1.100.3-1.300.1 2.400-.1 2.100 2-2 1.900-.5-1.600.9 1.200 0-1.700.5-1.600 2q-.2 1.700.1 3.300z" fill="#2a1f14"/></svg>
<svg class="ic" style="left:1296.0px;top:278.0px" width="24" height="24" viewBox="0 0 24 24"><circle cx="12" cy="11.800" r="10.600" fill="#f6f6f5" stroke="#8e8e8c" stroke-width=".9"/><circle cx="12" cy="11.800" r="8.900" fill="url(#gComp)" stroke="#9a9a98" stroke-width=".8"/><path d="M12 4.500v14.600M4.700 11.800h14.600" stroke="#d8d8d6" stroke-width=".6"/><path d="M7.300 7.100l6.200 3.500-3 3z" fill="#e23030" stroke="#b01818" stroke-width=".4"/><path d="M16.700 16.500l-6.200-2.900 3-3z" fill="#4a78c8" stroke="#2e58a0" stroke-width=".4"/></svg>
<div style="left:3px;top:800px;width:1325px;height:1px;background:#a9a7a3;"></div>
<div style="left:3px;top:801px;width:1325px;height:22px;background:#edeceb;"></div>
<div style="left:178.5px;top:803px;width:1px;height:18px;background:#c6c4c0;"></div><div style="left:179.5px;top:803px;width:1px;height:18px;background:#f9f9f8;"></div>
<div style="left:417.5px;top:803px;width:1px;height:18px;background:#c6c4c0;"></div><div style="left:418.5px;top:803px;width:1px;height:18px;background:#f9f9f8;"></div>
<div style="left:602.0px;top:803px;width:1px;height:18px;background:#c6c4c0;"></div><div style="left:603.0px;top:803px;width:1px;height:18px;background:#f9f9f8;"></div>
<div style="left:792.0px;top:803px;width:1px;height:18px;background:#c6c4c0;"></div><div style="left:793.0px;top:803px;width:1px;height:18px;background:#f9f9f8;"></div>
<div style="left:860.0px;top:803px;width:1px;height:18px;background:#c6c4c0;"></div><div style="left:861.0px;top:803px;width:1px;height:18px;background:#f9f9f8;"></div>
<div style="left:888.5px;top:803px;width:1px;height:18px;background:#c6c4c0;"></div><div style="left:889.5px;top:803px;width:1px;height:18px;background:#f9f9f8;"></div>
<div style="left:917.5px;top:803px;width:1px;height:18px;background:#c6c4c0;"></div><div style="left:918.5px;top:803px;width:1px;height:18px;background:#f9f9f8;"></div>
<div style="left:947.0px;top:803px;width:1px;height:18px;background:#c6c4c0;"></div><div style="left:948.0px;top:803px;width:1px;height:18px;background:#f9f9f8;"></div>
<div style="left:1064.0px;top:803px;width:1px;height:18px;background:#c6c4c0;"></div><div style="left:1065.0px;top:803px;width:1px;height:18px;background:#f9f9f8;"></div>
<div style="left:1140.0px;top:803px;width:1px;height:18px;background:#c6c4c0;"></div><div style="left:1141.0px;top:803px;width:1px;height:18px;background:#f9f9f8;"></div>
<div style="left:1283.0px;top:803px;width:1px;height:18px;background:#c6c4c0;"></div><div style="left:1284.0px;top:803px;width:1px;height:18px;background:#f9f9f8;"></div>
<div class="t" style="left:12.2px;top:802.50px;font-size:13px;letter-spacing:0.04px;color:#1a1a1a;font-weight:normal;" id="s0">Page 1 of 1</div>
<div class="t" style="left:188.0px;top:802.50px;font-size:13px;letter-spacing:0.33px;color:#1a1a1a;font-weight:normal;" id="s1">0 words, 0 characters</div>
<div class="t" style="left:426.2px;top:802.50px;font-size:13px;letter-spacing:0.348px;color:#1a1a1a;font-weight:normal;" id="s2">Default Style</div>
<div class="t" style="left:656.3px;top:802.50px;font-size:13px;letter-spacing:0.167px;color:#1a1a1a;font-weight:normal;" id="s3">English (USA)</div>
<div class="t" style="left:1291.1px;top:802.50px;font-size:13px;letter-spacing:0.74px;color:#1a1a1a;font-weight:normal;" id="s4">80%</div>
<svg class="ic" style="left:860px;top:801px" width="480" height="22" viewBox="860 801 480 22"><rect x="870" y="810" width="9" height="6" fill="#8e8c88"/><path d="M880.5 808v10M879 808.5h3M879 817.5h3" stroke="#8e8c88" stroke-width="1"/><rect x="900.5" y="806.5" width="9" height="10" fill="#f4f4f3" stroke="#a3a19d"/><path d="M903 811.5l2 2.5 3.5-5.5" stroke="#a3a19d" stroke-width="1.1" fill="none"/><path d="M1077.5 808.5h5l2.5 2.5v6.5h-7.5z" fill="#fdfdfd" stroke="#3c3c3c"/><path d="M1082.5 808.5v2.5h2.5" fill="none" stroke="#3c3c3c" stroke-width=".8"/><path d="M1091.5 808.5h4.5l2.5 2.5v6.5h-7z" fill="#fdfdfd" stroke="#9d9b97"/><path d="M1101.500 808.5h4.5l2.500 2.5v6.5h-7z" fill="#fdfdfd" stroke="#9d9b97"/><path d="M1115.500 810.500h2v-2h5.500v9h-7.500zM1123 808.5h5.500l2 2.500v6.500h-7.500z" fill="#fdfdfd" stroke="#9d9b97"/><path d="M1151 813h8" stroke="#8e8c88" stroke-width="2"/><path d="M1268 813h8M1272 809v8" stroke="#8e8c88" stroke-width="2"/><path d="M1165 813.300h97" stroke="#a5a3a0" stroke-width="1.500"/><path d="M1187.800 808v10M1213.200 808v10" stroke="#a09e9b" stroke-width="1.800"/><circle cx="1200.700" cy="813.200" r="4" fill="#fbfbfa" stroke="#8a8884" stroke-width="1.1"/></svg>
<div style="left:0px;top:5px;width:1px;height:821px;background:#4e78b8;"></div><div style="left:1px;top:5px;width:1px;height:821px;background:#6792d0;"></div><div style="left:2px;top:5px;width:1px;height:821px;background:#7fa2d8;"></div>
<div style="left:1328px;top:5px;width:1px;height:821px;background:#8fb0e0;"></div><div style="left:1329px;top:5px;width:1px;height:821px;background:#6792d0;"></div><div style="left:1330px;top:5px;width:1px;height:821px;background:#4e78b8;"></div>
<div style="left:0px;top:823px;width:1331px;height:1px;background:#8fb0e0;"></div><div style="left:0px;top:824px;width:1331px;height:1px;background:#6792d0;"></div><div style="left:0px;top:825px;width:1331px;height:1px;background:#4e78b8;"></div>
</body></html>
